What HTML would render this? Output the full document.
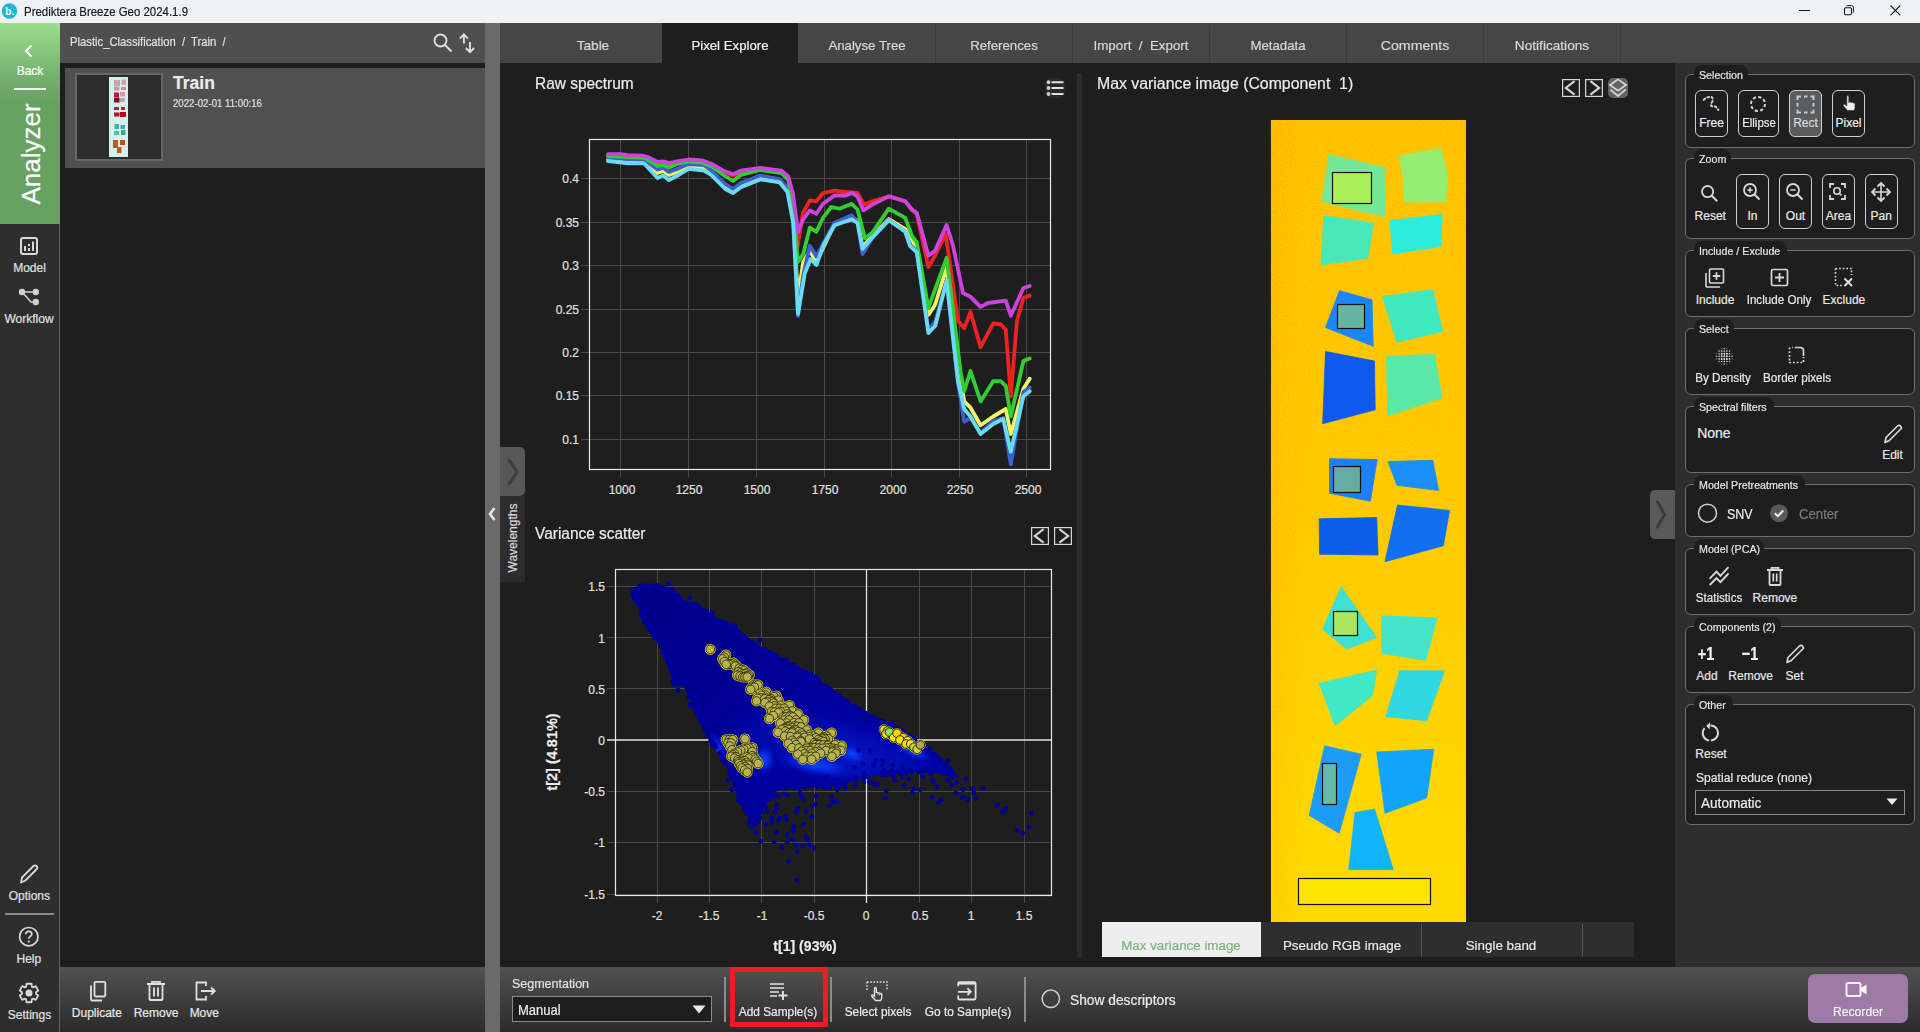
<!DOCTYPE html><html><head><meta charset="utf-8"><title>Prediktera Breeze Geo</title><style>
*{margin:0;padding:0;box-sizing:border-box}
html,body{width:1920px;height:1032px;overflow:hidden;background:#1e1e1e;font-family:"Liberation Sans",sans-serif;color:#e6e6e6}
.a{position:absolute}
.t{position:absolute;white-space:pre;line-height:1;-webkit-text-stroke:0.2px currentColor}
svg{position:absolute;overflow:visible}
</style></head><body>
<div class="a" style="left:0px;top:0px;width:1920px;height:23px;background:#eef2f5;"></div>
<svg style="left:1px;top:3px;" width="17" height="17" viewBox="0 0 17 17"><circle cx="8.5" cy="8" r="7.7" fill="#19b6d6"/><text x="4" y="12" font-size="10.5" font-weight="bold" fill="#fff" font-family="Liberation Sans">b.</text></svg>
<div class="t" style="top:5.59px;font-size:12.30px;color:#1a1a1a;left:23.50px;transform:scaleX(0.93);transform-origin:0 0;">Prediktera Breeze Geo 2024.1.9</div>
<div class="a" style="left:1799px;top:10px;width:11px;height:1px;background:#1a1a1a;"></div>
<svg style="left:1843px;top:5px;" width="12" height="12" viewBox="0 0 12 12"><rect x="1.5" y="2.8" width="7" height="7" rx="1.2" fill="none" stroke="#1a1a1a" stroke-width="1.1"/><path d="M3.3 1.2Q3.6 0.6 4.6 0.6H8.4Q10.4 0.6 10.4 2.6V6.5Q10.4 7.6 9.8 8" fill="none" stroke="#1a1a1a" stroke-width="1"/></svg>
<svg style="left:1890px;top:5px;" width="11" height="11" viewBox="0 0 11 11"><path d="M0.5 0.5L10.3 10.3M10.3 0.5L0.5 10.3" stroke="#1a1a1a" stroke-width="1.1"/></svg>
<div class="a" style="left:0px;top:23px;width:60px;height:1009px;background:#2e2e2e;"></div>
<div class="a" style="left:59px;top:224px;width:1px;height:808px;background:#666;"></div>
<div class="a" style="left:0px;top:23px;width:60px;height:201px;background:linear-gradient(#9cde8b 0px,#72ad6c 58px,#68a263 80px,#68a263 201px);"></div>
<svg style="left:24px;top:44px;" width="10" height="14" viewBox="0 0 10 14"><path d="M7.5 1.5L2 7L7.5 12.5" fill="none" stroke="#fff" stroke-width="2"/></svg>
<div class="t" style="top:65.34px;font-size:12.00px;color:#ffffff;left:-170.00px;width:400px;text-align:center;">Back</div>
<div class="a" style="left:14px;top:88px;width:32px;height:2px;background:#f4f4f4;"></div>
<div class="t" style="left:31px;top:154px;font-size:26px;color:#fff;transform:translate(-50%,-50%) rotate(-90deg);transform-origin:50% 50%">Analyzer</div>
<svg style="left:20px;top:237px;" width="19" height="19" viewBox="0 0 19 19"><rect x="1" y="1" width="16" height="16" rx="2" fill="none" stroke="#d8d8d8" stroke-width="2"/><rect x="4" y="9" width="2" height="5" fill="#d8d8d8"/><rect x="8" y="7" width="2" height="2" fill="#d8d8d8"/><rect x="8" y="11" width="2" height="3" fill="#d8d8d8"/><rect x="12" y="4.5" width="2" height="9.5" fill="#d8d8d8"/></svg>
<div class="t" style="top:261.54px;font-size:12.00px;color:#e0e0e0;left:-170.50px;width:400px;text-align:center;">Model</div>
<svg style="left:18px;top:287px;" width="22" height="20" viewBox="0 0 22 20"><path d="M4 5H17.8M4 5L13 15H17.8" fill="none" stroke="#d0d0d0" stroke-width="1.5"/><circle cx="4" cy="5" r="3.2" fill="#d0d0d0"/><circle cx="17.8" cy="5" r="3.2" fill="#d0d0d0"/><circle cx="17.8" cy="15" r="3.2" fill="#d0d0d0"/></svg>
<div class="t" style="top:312.74px;font-size:12.00px;color:#e0e0e0;left:-171.00px;width:400px;text-align:center;">Workflow</div>
<svg style="left:18px;top:863px;" width="22" height="22" viewBox="0 0 22 22"><path d="M3 19.5L4 14.5L15.5 3Q17 1.7 18.5 3Q20 4.5 18.8 6L7.3 17.5Z" fill="none" stroke="#d8d8d8" stroke-width="1.8" stroke-linejoin="round"/></svg>
<div class="t" style="top:889.74px;font-size:12.00px;color:#e0e0e0;left:-170.70px;width:400px;text-align:center;">Options</div>
<div class="a" style="left:5px;top:913px;width:49px;height:2px;background:#8a8a8a;"></div>
<svg style="left:18px;top:926px;" width="22" height="22" viewBox="0 0 22 22"><circle cx="10.8" cy="10.7" r="9.2" fill="none" stroke="#d8d8d8" stroke-width="1.7"/><path d="M7.8 8.3Q7.8 5.3 10.8 5.3Q13.8 5.3 13.8 8Q13.8 9.6 12 10.6Q10.8 11.4 10.8 12.8" fill="none" stroke="#d8d8d8" stroke-width="1.7"/><circle cx="10.8" cy="15.6" r="1.1" fill="#d8d8d8"/></svg>
<div class="t" style="top:952.54px;font-size:12.00px;color:#e0e0e0;left:-171.20px;width:400px;text-align:center;">Help</div>
<svg style="left:18px;top:982px;" width="22" height="22" viewBox="0 0 22 22"><polygon points="8.44,1.75 13.56,1.75 13.85,4.61 15.11,5.33 17.73,4.16 20.29,8.59 17.96,10.28 17.96,11.72 20.29,13.41 17.73,17.84 15.11,16.67 13.85,17.39 13.56,20.25 8.44,20.25 8.15,17.39 6.89,16.67 4.27,17.84 1.71,13.41 4.04,11.72 4.04,10.28 1.71,8.59 4.27,4.16 6.89,5.33 8.15,4.61" fill="none" stroke="#d8d8d8" stroke-width="1.8" stroke-linejoin="round"/><circle cx="11" cy="11" r="3.5" fill="#d8d8d8"/></svg>
<div class="t" style="top:1008.74px;font-size:12.00px;color:#e0e0e0;left:-170.50px;width:400px;text-align:center;">Settings</div>
<div class="a" style="left:60px;top:23px;width:425px;height:40px;background:#4f4f4f;"></div>
<div class="t" style="top:35.59px;font-size:12.30px;color:#e0e0e0;left:69.80px;transform:scaleX(0.915);transform-origin:0 0;">Plastic_Classification  /  Train  /</div>
<svg style="left:432px;top:32px;" width="22" height="22" viewBox="0 0 22 22"><circle cx="8.5" cy="8.5" r="6" fill="none" stroke="#e0e0e0" stroke-width="1.8"/><path d="M13 13L19.5 19.5" stroke="#e0e0e0" stroke-width="2"/></svg>
<svg style="left:459px;top:32px;" width="18" height="22" viewBox="0 0 18 22"><path d="M4.9 11.6V2.6M0.8 6.6L4.9 2.4L9 6.6" fill="none" stroke="#e0e0e0" stroke-width="1.9"/><path d="M11 10V20.2M6.9 16L11 20.2L15.1 16" fill="none" stroke="#e0e0e0" stroke-width="1.9"/></svg>
<div class="a" style="left:65px;top:68px;width:420px;height:100px;background:#505050;"></div>
<div class="a" style="left:75px;top:73px;width:88px;height:88px;background:#2c2c2c;border:2px solid #666"></div>
<svg style="left:109px;top:77px;" width="19" height="80" viewBox="0 0 19 80"><rect width="19" height="80" fill="#d6eeee"/><path d="M5 3H11V9H5Z" fill="#c8a2a8"/><path d="M12.5 2.5H17V8H12.5Z" fill="#cba6ab"/><path d="M5 9.5H10.5V13.5H5Z" fill="#c29aa0"/><path d="M12 10H17V13H12Z" fill="#d08a92"/><path d="M5 15.5H10V20H5Z" fill="#b41a2a"/><path d="M11 15H16V19.5H11Z" fill="#c89ca2"/><path d="M5 20.5H10.5V25.5H5Z" fill="#7c1018"/><path d="M11 21H16V25H11Z" fill="#c8a0a6"/><path d="M5 30H10V33H5Z" fill="#a02030"/><path d="M12 30H16V33H12Z" fill="#a82838"/><path d="M5 35.5H10.5V39.5H5Z" fill="#b01020"/><path d="M11 35H17V40H11Z" fill="#a81020"/><path d="M5.5 47H10V52H5.5Z" fill="#38b8a8"/><path d="M11.5 48H16V52H11.5Z" fill="#40b0b0"/><path d="M5 54H10V58H5Z" fill="#50c0a8"/><path d="M12 53H16.5V58H12Z" fill="#30a898"/><path d="M4 63H9V71H4Z" fill="#c05818"/><path d="M11 63H16V68H11Z" fill="#c05020"/><path d="M8 70H12.5V76H8Z" fill="#c05a20"/></svg>
<div class="t" style="top:75.49px;font-size:17.50px;color:#ececec;font-weight:bold;left:173.00px;">Train</div>
<div class="t" style="top:98.11px;font-size:10.50px;color:#e0e0e0;left:173.00px;transform:scaleX(0.92);transform-origin:0 0;">2022-02-01 11:00:16</div>
<div class="a" style="left:60px;top:967px;width:425px;height:65px;background:linear-gradient(#515151,#2b2b2b);"></div>
<svg style="left:85px;top:979px;" width="24" height="24" viewBox="0 0 24 24"><path d="M6 6.5V20.5Q6 21.5 7 21.5H17" fill="none" stroke="#e0e0e0" stroke-width="1.8"/><rect x="9.5" y="2.9" width="10.8" height="14.6" rx="1.2" fill="none" stroke="#e0e0e0" stroke-width="1.8"/></svg>
<div class="t" style="top:1006.54px;font-size:12.00px;color:#e8e8e8;left:-103.20px;width:400px;text-align:center;">Duplicate</div>
<svg style="left:144px;top:979px;" width="24" height="24" viewBox="0 0 24 24"><path d="M3 5H21M8 4.5V2.8H16V4.5" fill="none" stroke="#e0e0e0" stroke-width="1.8"/><path d="M5.5 5.5V20.2Q5.5 21 6.3 21H17.7Q18.5 21 18.5 20.2V5.5" fill="none" stroke="#e0e0e0" stroke-width="1.8"/><path d="M10 8.5V17.5M14 8.5V17.5" stroke="#e0e0e0" stroke-width="1.8"/></svg>
<div class="t" style="top:1006.54px;font-size:12.00px;color:#e8e8e8;left:-44.00px;width:400px;text-align:center;">Remove</div>
<svg style="left:193px;top:979px;" width="26" height="24" viewBox="0 0 26 24"><path d="M13 7V3.5H3.5V20.5H13V17" fill="none" stroke="#e0e0e0" stroke-width="1.8"/><path d="M8 12H21.5M18 8.5L21.8 12L18 15.5" fill="none" stroke="#e0e0e0" stroke-width="1.8"/></svg>
<div class="t" style="top:1006.54px;font-size:12.00px;color:#e8e8e8;left:4.30px;width:400px;text-align:center;">Move</div>
<div class="a" style="left:485px;top:23px;width:15px;height:1009px;background:#6a6a6a;"></div>
<svg style="left:487px;top:506px;" width="10" height="16" viewBox="0 0 10 16"><path d="M7.5 2L3 8L7.5 14" fill="none" stroke="#e8e8e8" stroke-width="2.6"/></svg>
<div class="a" style="left:500px;top:23px;width:1420px;height:40px;background:#464646;"></div>
<div class="a" style="left:662px;top:25px;width:1px;height:38px;background:#3a3a3a;"></div>
<div class="a" style="left:662px;top:23px;width:136px;height:40px;background:#1e1e1e;"></div>
<div class="a" style="left:935px;top:25px;width:1px;height:38px;background:#3a3a3a;"></div>
<div class="a" style="left:1072px;top:25px;width:1px;height:38px;background:#3a3a3a;"></div>
<div class="a" style="left:1209px;top:25px;width:1px;height:38px;background:#3a3a3a;"></div>
<div class="a" style="left:1346px;top:25px;width:1px;height:38px;background:#3a3a3a;"></div>
<div class="a" style="left:1483px;top:25px;width:1px;height:38px;background:#3a3a3a;"></div>
<div class="a" style="left:1620px;top:25px;width:1px;height:38px;background:#3a3a3a;"></div>
<div class="t" style="top:39.47px;font-size:13.50px;color:#d8d8d8;left:393.00px;width:400px;text-align:center;transform:scaleX(1.0);transform-origin:200px 0;">Table</div>
<div class="t" style="top:39.47px;font-size:13.50px;color:#f2f2f2;left:530.00px;width:400px;text-align:center;transform:scaleX(0.98);transform-origin:200px 0;">Pixel Explore</div>
<div class="t" style="top:39.47px;font-size:13.50px;color:#d8d8d8;left:666.50px;width:400px;text-align:center;transform:scaleX(0.98);transform-origin:200px 0;">Analyse Tree</div>
<div class="t" style="top:39.47px;font-size:13.50px;color:#d8d8d8;left:803.50px;width:400px;text-align:center;transform:scaleX(0.98);transform-origin:200px 0;">References</div>
<div class="t" style="top:39.47px;font-size:13.50px;color:#d8d8d8;left:940.50px;width:400px;text-align:center;transform:scaleX(0.99);transform-origin:200px 0;">Import  /  Export</div>
<div class="t" style="top:39.47px;font-size:13.50px;color:#d8d8d8;left:1077.50px;width:400px;text-align:center;transform:scaleX(0.98);transform-origin:200px 0;">Metadata</div>
<div class="t" style="top:39.47px;font-size:13.50px;color:#d8d8d8;left:1214.50px;width:400px;text-align:center;transform:scaleX(1.05);transform-origin:200px 0;">Comments</div>
<div class="t" style="top:39.47px;font-size:13.50px;color:#d8d8d8;left:1351.50px;width:400px;text-align:center;transform:scaleX(1.01);transform-origin:200px 0;">Notifications</div>
<div class="a" style="left:1077px;top:73px;width:5px;height:884px;background:#2c2c2c;"></div>
<div class="t" style="top:76.06px;font-size:16.00px;color:#ececec;left:535.30px;transform:scaleX(0.965);transform-origin:0 0;">Raw spectrum</div>
<svg style="left:1045px;top:78px;" width="20" height="20" viewBox="0 0 20 20"><rect width="20" height="20" rx="6" fill="#2a2a2a"/><circle cx="3.5" cy="4.2" r="1.9" fill="#d0d0d0"/><circle cx="3.5" cy="10" r="1.9" fill="#d0d0d0"/><circle cx="3.5" cy="16" r="1.9" fill="#d0d0d0"/><path d="M6.5 4.2H18.5M6.5 10H18.5M6.5 16H18.5" stroke="#e0e0e0" stroke-width="2"/></svg>
<div class="t" style="top:525.76px;font-size:16.00px;color:#ececec;left:535.00px;transform:scaleX(0.965);transform-origin:0 0;">Variance scatter</div>
<div class="t" style="top:76.06px;font-size:16.00px;color:#ececec;left:1097.10px;transform:scaleX(0.99);transform-origin:0 0;">Max variance image (Component  1)</div>
<svg style="left:1562px;top:79px;" width="18" height="18" viewBox="0 0 18 18"><rect x="0.6" y="0.6" width="16.8" height="16.8" fill="#1e1e1e" stroke="#d8d8d8" stroke-width="1.2"/><path d="M12.6 2.2L3.8 8.9L12.6 15.6" fill="none" stroke="#d4d4d4" stroke-width="2.1"/></svg>
<svg style="left:1585px;top:79px;" width="18" height="18" viewBox="0 0 18 18"><rect x="0.6" y="0.6" width="16.8" height="16.8" fill="#1e1e1e" stroke="#d8d8d8" stroke-width="1.2"/><path d="M5.4 2.2L14.2 8.9L5.4 15.6" fill="none" stroke="#d4d4d4" stroke-width="2.1"/></svg>
<svg style="left:1608px;top:78px;" width="20" height="20" viewBox="0 0 20 20"><rect width="20" height="20" rx="5" fill="#636363"/><path d="M10 1.4L18 7L10 12.8L2 7Z" fill="none" stroke="#d6d6d6" stroke-width="1.7"/><path d="M2.4 11.6L10 18L17.8 11.4" fill="none" stroke="#d6d6d6" stroke-width="1.8"/></svg>
<svg style="left:1031px;top:527px;" width="18" height="18" viewBox="0 0 18 18"><rect x="0.6" y="0.6" width="16.8" height="16.8" fill="#1e1e1e" stroke="#d8d8d8" stroke-width="1.2"/><path d="M12.6 2.2L3.8 8.9L12.6 15.6" fill="none" stroke="#d4d4d4" stroke-width="2.1"/></svg>
<svg style="left:1054px;top:527px;" width="18" height="18" viewBox="0 0 18 18"><rect x="0.6" y="0.6" width="16.8" height="16.8" fill="#1e1e1e" stroke="#d8d8d8" stroke-width="1.2"/><path d="M5.4 2.2L14.2 8.9L5.4 15.6" fill="none" stroke="#d4d4d4" stroke-width="2.1"/></svg>
<div class="a" style="left:500px;top:447px;width:25px;height:49px;background:#585858;border-radius:0 5px 5px 0"></div>
<svg style="left:503px;top:455px;" width="20" height="34" viewBox="0 0 20 34"><path d="M6 5L14 17L6 29" fill="none" stroke="#3e3e3e" stroke-width="3" stroke-linecap="round"/></svg>
<div class="a" style="left:500px;top:496px;width:25px;height:86px;background:#2c2c2c;"></div>
<div class="t" style="left:512.5px;top:538px;font-size:12px;color:#d8d8d8;transform:translate(-50%,-50%) rotate(-90deg)">Wavelengths</div>
<div class="a" style="left:1650px;top:490px;width:25px;height:49px;background:#5a5a5a;border-radius:5px 0 0 5px"></div>
<svg style="left:1652px;top:497px;" width="20" height="36" viewBox="0 0 20 36"><path d="M5.5 5L12.5 17.5L5.5 30" fill="none" stroke="#3c3c3c" stroke-width="3" stroke-linecap="round"/></svg>
<div class="t" style="top:939.03px;font-size:14.50px;color:#ececec;font-weight:bold;left:604.80px;width:400px;text-align:center;transform:scaleX(0.97);transform-origin:200px 0;">t[1] (93%)</div>
<div class="t" style="left:552.3px;top:752px;font-size:14.5px;font-weight:bold;color:#ececec;transform:translate(-50%,-50%) rotate(-90deg)">t[2] (4.81%)</div>
<svg style="left:0;top:0" width="1920" height="1032"><path d="M620.5 140V477M688.5 140V477M756.5 140V477M824.5 140V477M891.5 140V477M959.5 140V477M1026.5 140V477M581 178.5H1051M581 222.5H1051M581 265.5H1051M581 309.5H1051M581 352.5H1051M581 395.5H1051M581 439.5H1051" stroke="#4a4a4a" stroke-width="1" fill="none"/><rect x="589.5" y="139.5" width="461" height="330" fill="none" stroke="#e8e8e8" stroke-width="1.2"/><polyline points="608.0,159.5 628.4,161.0 644.0,161.5 657.5,173.0 663.3,171.0 669.0,175.0 677.0,172.0 688.5,166.5 704.0,168.0 711.8,172.5 725.3,186.0 733.0,191.0 740.9,185.0 760.2,177.0 779.6,180.5 787.4,189.0 793.2,215.0 798.0,298.0 803.2,262.0 809.8,250.7 816.4,262.0 834.5,224.0 851.8,217.0 857.5,221.0 862.5,247.0 872.4,236.0 888.8,219.0 905.3,229.0 912.0,240.0 916.8,249.0 928.4,315.0 935.0,305.0 946.6,267.8 958.0,365.0 964.2,401.4 970.5,407.7 980.6,425.3 993.2,416.5 1005.8,409.0 1010.8,434.0 1023.4,388.8 1029.7,378.7" fill="none" stroke="#f2f26a" stroke-width="3.8" stroke-linejoin="round" stroke-linecap="round"/><polyline points="608.0,158.0 628.4,159.0 644.0,159.5 657.5,169.5 663.3,168.0 669.0,172.0 677.0,169.0 688.5,164.0 704.0,165.0 711.8,171.0 725.3,184.0 733.0,189.0 740.9,183.0 760.2,175.5 779.6,179.0 787.4,188.0 793.2,218.0 798.0,316.0 803.2,275.4 809.8,245.8 816.4,256.5 834.5,222.7 851.8,215.3 857.5,222.7 862.5,254.0 872.4,238.0 888.8,220.0 905.3,231.8 910.0,245.0 916.8,251.0 928.4,330.0 935.0,322.0 946.6,282.0 958.0,383.0 964.2,421.5 970.5,418.0 980.6,433.0 993.2,421.0 1003.3,418.0 1010.8,464.3 1023.4,392.0 1029.7,387.5" fill="none" stroke="#3f5fd0" stroke-width="3.8" stroke-linejoin="round" stroke-linecap="round"/><polyline points="608.0,155.5 620.7,155.5 628.4,156.5 642.0,157.0 647.8,158.5 657.5,164.0 663.3,163.0 669.0,165.0 677.0,163.0 688.5,160.5 702.0,161.5 711.8,165.5 723.4,172.0 733.0,175.5 740.9,172.0 760.2,169.0 781.5,172.0 788.3,178.0 793.0,200.0 797.4,247.4 803.0,212.8 809.8,200.5 816.4,201.3 823.0,193.0 834.5,190.6 846.0,192.0 857.5,193.0 864.0,204.6 872.4,201.3 888.8,196.4 905.3,201.3 912.0,210.0 916.8,214.0 928.4,267.2 935.0,255.7 945.7,234.2 958.0,320.7 964.2,328.3 970.5,312.0 980.6,347.2 993.2,323.3 1000.8,324.5 1005.8,329.6 1010.8,396.3 1017.0,320.7 1023.4,298.0 1029.7,295.6" fill="none" stroke="#ee2222" stroke-width="3.8" stroke-linejoin="round" stroke-linecap="round"/><polyline points="608.0,156.0 628.4,157.0 644.0,157.5 657.5,166.0 663.3,165.0 669.0,167.5 677.0,164.0 688.5,161.5 702.0,162.5 711.8,166.5 723.4,175.0 733.0,181.0 740.9,175.0 760.2,170.0 781.5,173.0 788.3,180.0 793.0,205.0 798.0,262.0 803.2,254.0 809.8,227.7 816.4,231.8 823.0,217.8 831.2,207.0 839.4,208.7 851.8,203.8 857.5,209.5 865.0,238.4 872.4,232.6 888.8,208.7 905.3,217.8 912.0,236.0 916.8,242.5 928.4,308.0 946.6,257.8 960.5,371.0 964.2,391.3 970.5,371.0 980.6,401.4 993.2,381.2 1000.8,381.2 1005.8,386.2 1010.8,416.5 1023.4,361.0 1029.7,358.5" fill="none" stroke="#33cc33" stroke-width="3.8" stroke-linejoin="round" stroke-linecap="round"/><polyline points="608.0,154.2 620.7,154.2 628.4,155.2 642.0,155.6 647.8,157.0 657.5,162.0 663.3,161.4 669.0,163.0 677.0,161.4 688.5,159.5 702.0,160.4 711.8,164.0 723.4,170.7 733.0,174.2 740.9,170.7 760.2,167.8 781.5,170.7 788.3,176.5 793.0,194.0 798.0,232.0 803.2,219.4 809.8,210.4 816.4,213.7 823.0,203.8 834.5,195.5 846.0,195.5 851.8,193.0 857.5,196.4 863.3,210.4 872.4,204.6 888.8,196.4 905.3,201.3 912.0,209.5 916.8,212.8 928.4,255.7 935.0,250.7 946.6,225.0 952.9,245.2 963.0,293.0 970.5,296.8 980.6,306.9 988.0,303.0 1005.8,300.6 1010.8,315.7 1023.4,288.0 1029.7,286.0" fill="none" stroke="#cc44dd" stroke-width="3.8" stroke-linejoin="round" stroke-linecap="round"/><polyline points="608.0,161.0 628.4,163.3 644.0,163.3 657.5,178.0 663.3,175.5 668.8,180.0 677.0,176.0 688.5,168.8 704.0,170.7 711.8,175.5 725.3,189.0 733.0,193.0 740.9,187.2 760.2,179.4 779.6,182.3 787.4,192.0 793.2,223.0 798.0,314.0 804.8,273.4 810.6,259.0 816.4,265.0 824.0,244.0 834.5,225.2 851.8,219.4 857.5,223.0 862.5,249.0 872.4,237.5 888.8,220.2 905.3,231.8 910.0,245.8 916.8,252.4 928.4,333.0 935.3,325.8 946.6,280.5 958.0,381.2 964.2,409.0 970.5,416.5 980.6,434.0 993.2,424.0 1003.3,419.0 1010.8,451.7 1023.4,396.3 1029.7,391.3" fill="none" stroke="#6adcf2" stroke-width="3.8" stroke-linejoin="round" stroke-linecap="round"/><path d="M657.5 570V903M709.5 570V903M761.5 570V903M814.5 570V903M919.5 570V903M971.5 570V903M1024.5 570V903M607 586.5H1051M607 637.5H1051M607 688.5H1051M607 791.5H1051M607 842.5H1051M607 894.5H1051" stroke="#4a4a4a" stroke-width="1" fill="none"/><path d="M866.5 570V903M607 740H1051" stroke="#e4e4e4" stroke-width="1.3" fill="none"/><rect x="615.5" y="569.5" width="436" height="326" fill="none" stroke="#e8e8e8" stroke-width="1.2"/><defs><radialGradient id="rg1"><stop offset="0" stop-color="#1048ff" stop-opacity="1"/><stop offset="0.5" stop-color="#0830f0" stop-opacity="0.7"/><stop offset="1" stop-color="#0010c0" stop-opacity="0"/></radialGradient><linearGradient id="tl" x1="634" y1="588" x2="800" y2="740" gradientUnits="userSpaceOnUse"><stop offset="0" stop-color="#000080" stop-opacity="0.8"/><stop offset="1" stop-color="#000080" stop-opacity="0"/></linearGradient><clipPath id="cc"><polygon points="633.0,588.0 640.0,585.5 650.0,584.7 658.5,583.0 662.6,588.0 673.6,587.6 678.8,596.3 688.0,602.7 699.8,604.4 706.7,610.2 716.0,620.0 728.0,623.0 741.6,632.3 756.7,644.0 769.5,652.0 780.0,656.7 814.0,675.7 849.0,702.0 866.3,712.8 892.5,723.7 918.7,741.0 936.0,754.0 953.5,771.7 957.0,778.0 952.6,777.0 939.4,773.0 906.4,773.0 866.9,777.0 840.6,785.0 807.6,788.0 774.7,790.0 765.0,806.0 757.0,826.0 744.0,812.0 726.8,767.3 705.0,732.4 683.0,684.4 674.2,684.7 664.9,656.7 659.0,645.0 653.3,637.0 641.6,618.4 640.5,608.0 632.3,597.4"/></clipPath></defs><polygon points="633.0,588.0 640.0,585.5 650.0,584.7 658.5,583.0 662.6,588.0 673.6,587.6 678.8,596.3 688.0,602.7 699.8,604.4 706.7,610.2 716.0,620.0 728.0,623.0 741.6,632.3 756.7,644.0 769.5,652.0 780.0,656.7 814.0,675.7 849.0,702.0 866.3,712.8 892.5,723.7 918.7,741.0 936.0,754.0 953.5,771.7 957.0,778.0 952.6,777.0 939.4,773.0 906.4,773.0 866.9,777.0 840.6,785.0 807.6,788.0 774.7,790.0 765.0,806.0 757.0,826.0 744.0,812.0 726.8,767.3 705.0,732.4 683.0,684.4 674.2,684.7 664.9,656.7 659.0,645.0 653.3,637.0 641.6,618.4 640.5,608.0 632.3,597.4" fill="#00009e"/><g clip-path="url(#cc)"><rect x="620" y="575" width="350" height="260" fill="url(#tl)"/><ellipse cx="840" cy="752" rx="130" ry="40" fill="url(#rg1)" opacity="0.35" transform="rotate(14 840 752)"/><ellipse cx="715" cy="752" rx="14" ry="22" fill="url(#rg1)" transform="rotate(-20 715 752)"/><ellipse cx="764" cy="760" rx="12" ry="16" fill="url(#rg1)"/><ellipse cx="815" cy="764" rx="40" ry="12" fill="url(#rg1)" transform="rotate(12 815 764)"/><ellipse cx="852" cy="754" rx="16" ry="9" fill="url(#rg1)" transform="rotate(20 852 754)"/><ellipse cx="912" cy="750" rx="22" ry="8" fill="url(#rg1)" transform="rotate(28 912 750)"/></g><path d="M952.8 776.6h0M707.6 735.5h0M719.1 622.3h0M650.4 586.2h0M672.9 590.3h0M838.9 695.0h0M807.6 785.2h0M700.3 716.0h0M787.0 661.1h0M914.4 738.3h0M661.1 587.8h0M863.4 777.6h0M655.6 637.4h0M692.8 700.6h0M673.6 679.2h0M882.7 774.9h0M758.6 820.0h0M665.3 589.1h0M838.3 695.1h0M704.9 729.8h0M767.5 651.7h0M724.6 760.1h0M783.0 660.8h0M673.6 681.4h0M722.2 756.1h0M874.5 718.1h0M804.1 670.8h0M649.4 626.4h0M729.4 625.9h0M723.1 622.8h0M796.0 667.7h0M847.2 781.1h0M665.8 657.7h0M760.6 810.4h0M895.0 771.6h0M786.1 660.2h0M771.6 794.8h0M936.2 755.4h0M860.4 709.1h0M675.4 680.1h0M816.5 678.3h0M647.4 626.9h0M663.3 653.1h0M690.1 695.2h0M796.9 788.6h0M759.1 819.2h0M776.1 655.3h0M662.1 587.7h0M846.7 701.2h0M892.0 723.8h0M935.4 755.3h0M919.6 772.2h0M643.8 612.2h0M868.8 716.1h0M750.4 816.4h0M775.1 789.7h0M692.7 704.2h0M954.4 776.3h0M903.1 771.7h0M663.5 588.4h0M654.0 637.7h0M841.8 698.5h0M948.0 772.6h0M934.5 754.4h0M660.0 587.1h0M772.3 791.7h0M803.5 671.4h0M797.8 787.7h0M831.4 690.5h0M679.6 682.8h0M728.4 625.7h0M695.7 706.3h0M841.7 784.5h0M685.2 602.8h0M771.9 653.7h0M794.9 788.0h0M772.8 791.0h0M893.3 725.7h0M768.0 797.1h0M773.9 791.2h0M895.5 772.0h0M817.7 679.5h0M751.7 641.8h0M695.0 604.2h0M750.7 817.4h0M784.0 787.4h0M894.6 771.4h0M952.9 772.4h0M826.0 687.4h0M860.9 710.2h0M745.3 809.4h0M806.7 673.2h0M720.2 752.4h0M632.8 594.7h0M696.5 709.0h0M716.1 622.0h0M945.4 766.3h0M775.8 789.1h0M698.9 717.8h0M640.1 585.7h0M723.9 622.0h0M697.0 712.5h0M918.1 743.4h0M951.5 775.9h0M793.1 665.6h0M806.7 786.4h0M651.6 585.9h0M708.5 735.8h0M734.7 785.2h0M714.4 619.1h0M697.1 604.7h0M936.3 755.2h0M936.9 756.0h0M945.5 773.2h0M756.4 644.5h0M641.8 615.9h0M665.4 656.4h0M697.2 712.2h0M873.6 718.3h0M725.2 763.5h0M938.9 757.9h0M707.0 730.5h0M648.6 629.5h0M690.5 696.3h0M651.6 630.8h0M865.8 713.2h0M715.6 747.3h0M768.3 799.0h0M756.1 645.7h0M904.2 732.5h0M663.6 588.1h0M835.4 784.8h0M671.4 671.6h0M950.2 770.0h0M661.5 646.0h0M635.3 591.8h0M800.5 670.6h0M723.4 622.5h0M673.3 681.3h0M689.0 696.7h0M700.9 721.4h0M699.9 716.1h0M685.8 685.8h0M891.5 724.7h0M766.9 798.8h0M778.6 658.9h0M855.2 779.6h0M921.4 745.5h0M886.6 774.1h0M826.0 686.9h0M709.6 615.2h0M946.6 765.4h0M742.3 804.4h0M855.5 779.2h0M756.9 820.1h0M674.0 683.6h0M692.2 604.9h0M637.7 602.4h0M667.2 590.5h0M926.9 748.0h0M762.1 806.7h0M929.7 749.5h0M662.1 645.7h0M641.2 612.7h0M762.9 805.4h0M711.4 741.5h0M887.4 773.9h0M757.8 818.0h0M776.6 655.3h0M865.0 713.0h0M864.9 714.1h0M729.9 767.6h0M711.3 616.2h0M856.5 708.6h0M773.2 654.0h0M897.2 729.0h0M768.5 797.1h0M927.0 770.6h0M690.5 604.4h0M706.6 611.2h0M697.0 713.3h0M667.8 590.7h0M905.5 772.7h0M715.9 621.9h0M719.9 752.9h0M691.1 697.0h0M844.3 781.5h0M668.8 590.4h0M764.0 807.4h0M642.9 585.9h0M712.5 741.6h0M690.8 698.1h0M855.4 777.6h0M635.1 595.2h0M693.9 605.0h0M725.7 624.3h0M680.9 682.0h0M694.6 604.8h0M756.8 822.3h0M710.6 740.3h0M891.6 773.1h0M644.2 622.2h0M725.5 623.2h0M714.9 744.6h0M936.8 770.5h0M921.4 745.5h0M717.2 621.0h0M887.1 773.0h0M647.7 627.6h0M760.0 817.8h0M635.0 594.8h0M756.8 824.0h0M740.5 801.7h0M673.9 591.6h0M668.3 663.3h0M901.9 731.1h0M691.8 605.1h0M699.1 714.4h0M873.2 716.4h0M908.7 735.3h0M634.8 599.6h0M918.0 770.6h0M839.1 784.6h0M950.5 768.7h0M644.4 618.1h0M713.2 617.4h0M660.6 643.9h0M740.9 633.9h0M803.8 786.2h0M689.8 605.2h0M679.9 684.2h0M673.9 683.8h0M729.8 773.2h0M863.6 777.5h0M703.7 726.2h0M736.5 789.8h0M892.6 771.7h0M816.1 784.4h0M845.7 782.8h0M855.6 707.8h0M817.7 786.6h0M764.5 649.5h0M940.7 759.9h0M698.3 711.5h0M644.3 585.9h0M866.9 777.0h0M859.7 711.0h0M848.3 702.4h0M909.9 770.4h0M679.9 684.1h0M828.8 687.7h0M955.2 776.2h0M633.4 590.1h0M692.3 700.9h0M911.8 771.9h0M903.5 770.4h0M641.9 607.1h0M859.9 710.4h0M720.3 752.4h0M632.6 594.9h0M633.3 594.1h0M942.1 772.5h0M688.7 695.2h0M890.2 724.3h0M833.6 783.3h0M895.0 727.5h0M934.4 770.5h0M836.6 695.2h0M797.4 668.6h0M667.4 661.0h0M864.7 777.0h0M756.5 822.6h0M639.2 606.3h0M953.6 774.8h0M747.8 813.7h0M739.0 797.4h0M769.5 653.1h0M943.6 764.1h0M635.4 600.0h0M807.8 785.9h0M842.9 700.0h0M738.9 798.0h0M679.9 598.1h0M678.3 595.9h0M667.7 660.8h0M770.6 792.2h0M895.2 773.1h0M886.3 774.7h0M674.3 678.7h0M950.8 769.7h0M677.4 683.7h0M847.6 780.4h0M883.1 721.5h0M890.7 771.8h0M690.2 696.9h0M743.1 636.3h0M804.2 672.3h0M845.6 783.0h0M893.7 774.1h0M793.8 664.5h0M753.9 822.4h0M685.9 685.8h0M764.7 805.8h0M923.9 770.4h0M674.3 684.4h0M726.2 624.2h0M860.2 709.9h0M847.3 703.5h0M897.0 727.9h0M787.1 787.6h0M642.0 614.1h0M759.3 647.6h0M797.2 668.4h0M854.6 706.2h0M945.7 772.2h0M694.4 606.4h0M844.8 700.6h0M897.7 771.6h0M921.4 743.5h0M731.3 775.5h0M722.6 623.2h0M736.1 629.1h0M719.6 621.0h0M818.0 678.8h0M757.5 646.4h0M694.4 709.1h0M929.2 770.4h0M943.4 772.6h0M652.9 635.3h0M642.1 616.9h0M811.0 674.1h0M754.6 645.3h0M814.9 676.7h0M675.4 595.3h0M809.0 675.1h0M900.5 729.8h0M677.8 597.5h0M910.8 737.3h0M805.2 786.8h0M704.2 727.9h0M902.8 733.2h0M673.4 673.8h0M919.8 771.6h0M914.8 739.0h0M669.3 664.4h0M894.1 727.3h0M798.6 785.6h0M833.9 783.0h0M901.5 772.9h0M936.8 770.6h0M817.6 781.5h0M912.3 792.7h0M826.8 788.1h0M836.8 802.2h0M940.8 799.9h0M844.9 787.8h0M837.4 789.8h0M891.8 770.5h0M832.7 801.4h0M816.0 796.0h0M826.9 777.0h0M825.2 779.6h0M797.8 808.8h0M831.6 796.3h0M932.5 779.7h0M951.5 784.6h0M801.0 796.0h0M874.8 784.4h0M863.6 773.7h0M838.0 787.4h0M939.0 802.2h0M827.6 780.4h0M893.6 776.5h0M884.3 770.1h0M863.9 781.9h0M829.0 787.2h0M955.8 793.2h0M902.5 766.0h0M855.8 777.2h0M882.7 760.8h0M752.6 784.4h0M756.6 780.4h0M760.7 786.5h0M768.2 788.5h0M775.6 784.4h0M775.6 789.2h0M785.1 777.6h0M785.1 785.8h0M793.3 787.1h0M800.0 787.1h0M806.8 785.1h0M824.5 787.1h0M827.2 780.4h0M834.7 779.7h0M841.4 780.4h0M844.8 785.8h0M855.7 785.1h0M869.3 782.4h0M875.4 784.4h0M749.9 789.9h0M755.3 791.2h0M762.0 797.3h0M766.8 793.9h0M770.2 798.7h0M774.3 796.0h0M778.3 796.6h0M783.8 793.9h0M787.8 795.3h0M800.0 793.2h0M803.4 798.7h0M751.2 799.3h0M758.0 802.0h0M753.9 806.1h0M777.0 804.8h0M777.0 807.5h0M765.5 808.2h0M767.5 811.6h0M775.0 812.2h0M756.0 813.6h0M753.9 815.6h0M771.6 817.7h0M779.7 818.3h0M785.1 817.0h0M786.5 819.7h0M777.0 820.4h0M796.0 812.2h0M806.2 811.6h0M812.3 806.1h0M815.7 804.1h0M829.2 806.1h0M811.6 817.0h0M766.1 824.5h0M771.6 822.4h0M794.0 826.5h0M803.4 824.5h0M749.9 821.0h0M748.5 823.8h0M752.6 827.2h0M756.0 832.6h0M776.3 832.6h0M787.2 834.6h0M793.3 831.2h0M806.2 837.3h0M807.5 840.0h0M760.7 841.4h0M774.3 842.1h0M787.2 841.4h0M793.3 840.0h0M796.7 844.8h0M802.8 846.2h0M809.6 844.8h0M814.3 848.2h0M781.7 847.5h0M796.7 851.6h0M788.5 861.1h0M796.7 880.1h0M858.5 750.4h0M870.3 750.4h0M875.6 761.0h0M862.8 764.2h0M854.3 767.4h0M873.5 765.3h0M882.0 765.3h0M892.6 765.3h0M882.0 771.7h0M890.5 773.8h0M894.8 780.2h0M902.2 777.0h0M908.6 779.1h0M904.4 785.5h0M914.0 788.7h0M920.4 789.8h0M886.2 790.9h0M871.3 782.3h0M877.7 784.5h0M855.3 784.5h0M865.0 777.0h0M922.5 777.0h0M931.0 773.8h0M937.4 786.6h0M933.2 781.3h0M885.2 798.3h0M932.0 797.3h0M948.0 780.2h0M956.6 782.3h0M948.0 761.0h0M952.3 773.8h0M966.2 779.1h0M963.0 789.8h0M972.6 788.7h0M973.7 793.0h0M983.3 788.3h0M962.4 797.3h0M968.3 799.4h0M975.8 798.3h0M997.1 805.4h0M1002.5 812.2h0M1005.7 809.0h0M1031.2 813.3h0M1017.4 830.3h0M1022.7 833.5h0M1029.1 827.1h0M650.0 590.0h0M668.0 584.0h0M690.0 598.0h0M712.0 613.0h0M735.0 626.0h0M760.0 640.0h0M636.0 593.0h0M645.0 612.0h0M655.0 630.0h0M670.0 668.0h0M678.0 690.0h0M690.0 705.0h0M700.0 720.0h0M712.0 745.0h0M722.0 760.0h0M735.0 785.0h0M745.0 795.0h0M760.0 805.0h0M738.0 800.0h0M732.0 790.0h0M728.0 780.0h0" stroke="#00009a" stroke-width="4.8" stroke-linecap="round" fill="none"/><path d="M710.3 649.4h0M725.9 655.0h0M724.2 657.0h0M722.6 658.9h0M724.4 661.6h0M733.4 663.0h0M729.8 663.7h0M731.7 664.0h0M729.0 664.2h0M726.2 664.4h0M736.3 665.6h0M735.4 666.1h0M739.2 668.3h0M741.6 669.4h0M744.0 670.5h0M738.2 671.8h0M746.7 672.7h0M740.7 672.9h0M743.4 673.8h0M745.6 673.8h0M749.4 674.9h0M737.3 675.2h0M746.1 676.0h0M748.3 676.0h0M740.1 676.1h0M742.8 677.0h0M745.0 677.0h0M747.2 677.0h0M753.2 685.0h0M755.6 685.0h0M758.0 685.0h0M752.0 687.2h0M754.4 687.2h0M750.7 689.4h0M766.4 692.2h0M765.5 695.0h0M761.4 695.2h0M776.3 695.9h0M774.0 696.6h0M765.2 697.4h0M760.5 698.0h0M757.4 698.2h0M764.7 698.8h0M771.3 698.9h0M769.0 699.6h0M778.4 700.2h0M756.5 701.0h0M772.3 701.0h0M771.2 701.4h0M767.3 701.9h0M765.0 702.6h0M773.4 703.2h0M780.6 705.3h0M789.3 705.3h0M774.5 705.8h0M769.4 706.2h0M775.6 708.3h0M780.0 708.3h0M784.3 708.3h0M792.2 711.0h0M785.8 711.1h0M771.6 711.3h0M780.3 711.3h0M774.5 712.0h0M778.4 712.6h0M787.2 714.0h0M798.0 714.0h0M790.1 715.5h0M773.4 715.6h0M783.2 717.0h0M785.8 717.0h0M789.3 717.0h0M793.0 717.0h0M769.4 718.6h0M803.8 719.8h0M795.9 719.9h0M784.3 720.0h0M789.0 720.0h0M793.7 722.8h0M798.8 722.8h0M786.5 722.9h0M780.3 723.0h0M788.7 725.8h0M794.8 725.8h0M787.0 726.4h0M797.4 726.4h0M801.0 727.0h0M785.4 727.6h0M792.4 727.9h0M784.7 728.8h0M782.0 729.4h0M788.7 729.4h0M793.7 730.0h0M796.0 730.0h0M806.7 730.0h0M785.4 731.2h0M792.4 731.5h0M798.9 731.5h0M778.0 732.4h0M788.7 733.0h0M792.0 733.0h0M801.7 733.0h0M818.4 733.0h0M831.5 733.0h0M809.7 734.4h0M803.2 735.2h0M784.7 736.0h0M797.7 736.0h0M813.4 736.0h0M826.5 736.0h0M823.5 736.6h0M790.5 736.6h0M809.0 736.7h0M797.3 737.3h0M804.7 737.4h0M816.0 737.8h0M822.5 737.8h0M828.5 738.7h0M745.0 738.8h0M825.0 738.9h0M809.4 739.0h0M822.5 739.0h0M726.2 739.6h0M729.5 739.6h0M732.7 739.6h0M818.5 739.6h0M792.3 740.3h0M800.7 740.4h0M821.0 740.7h0M801.0 741.7h0M823.5 741.7h0M794.1 742.5h0M814.5 742.6h0M728.0 742.9h0M731.2 742.9h0M788.3 743.3h0M816.6 743.6h0M815.5 744.6h0M819.8 744.6h0M835.0 744.6h0M826.8 744.7h0M796.0 744.7h0M819.5 744.7h0M823.1 745.0h0M827.8 745.3h0M841.6 746.0h0M729.8 746.1h0M752.3 747.6h0M810.5 747.6h0M812.6 747.6h0M814.8 747.6h0M830.0 747.6h0M792.0 747.7h0M749.4 748.0h0M798.9 748.0h0M818.8 748.0h0M826.4 748.0h0M806.7 748.2h0M746.5 748.3h0M822.8 748.3h0M833.3 748.3h0M836.6 749.0h0M743.6 749.4h0M732.0 749.8h0M840.9 750.4h0M740.7 750.5h0M833.0 750.5h0M806.5 750.6h0M810.8 750.6h0M826.0 750.6h0M801.7 751.2h0M836.2 751.2h0M818.8 751.3h0M752.3 751.6h0M737.5 752.0h0M815.2 752.0h0M832.6 752.0h0M811.8 753.3h0M820.6 753.3h0M734.2 753.4h0M835.9 753.4h0M804.2 753.8h0M797.7 754.2h0M732.8 754.8h0M752.3 755.6h0M731.3 756.3h0M806.8 756.3h0M811.2 756.3h0M815.6 756.3h0M831.9 756.4h0M736.0 756.7h0M753.8 757.4h0M748.6 758.1h0M734.5 758.1h0M755.2 759.2h0M802.8 759.3h0M811.6 759.3h0M737.8 760.0h0M741.4 760.3h0M745.0 760.6h0M756.7 761.4h0M738.5 761.8h0M742.1 762.0h0M746.5 762.8h0M739.2 763.5h0M758.1 763.5h0M743.6 764.2h0M743.6 764.3h0M748.0 765.0h0M740.7 765.8h0M745.1 766.5h0M742.2 768.0h0M747.6 768.6h0M744.7 770.1h0M747.2 772.3h0" stroke="#e4dc10" stroke-width="10.8" stroke-linecap="round" fill="none"/><g fill="#b8b250" stroke="#302e04" stroke-width="0.9"><circle cx="710.3" cy="649.4" r="4.3"/><circle cx="725.9" cy="655.0" r="4.3"/><circle cx="724.2" cy="657.0" r="4.3"/><circle cx="722.6" cy="658.9" r="4.3"/><circle cx="724.4" cy="661.6" r="4.3"/><circle cx="733.4" cy="663.0" r="4.3"/><circle cx="729.8" cy="663.7" r="4.3"/><circle cx="731.7" cy="664.0" r="4.3"/><circle cx="729.0" cy="664.2" r="4.3"/><circle cx="726.2" cy="664.4" r="4.3"/><circle cx="736.3" cy="665.6" r="4.3"/><circle cx="735.4" cy="666.1" r="4.3"/><circle cx="739.2" cy="668.3" r="4.3"/><circle cx="741.6" cy="669.4" r="4.3"/><circle cx="744.0" cy="670.5" r="4.3"/><circle cx="738.2" cy="671.8" r="4.3"/><circle cx="746.7" cy="672.7" r="4.3"/><circle cx="740.7" cy="672.9" r="4.3"/><circle cx="743.4" cy="673.8" r="4.3"/><circle cx="745.6" cy="673.8" r="4.3"/><circle cx="749.4" cy="674.9" r="4.3"/><circle cx="737.3" cy="675.2" r="4.3"/><circle cx="746.1" cy="676.0" r="4.3"/><circle cx="748.3" cy="676.0" r="4.3"/><circle cx="740.1" cy="676.1" r="4.3"/><circle cx="742.8" cy="677.0" r="4.3"/><circle cx="745.0" cy="677.0" r="4.3"/><circle cx="747.2" cy="677.0" r="4.3"/><circle cx="753.2" cy="685.0" r="4.3"/><circle cx="755.6" cy="685.0" r="4.3"/><circle cx="758.0" cy="685.0" r="4.3"/><circle cx="752.0" cy="687.2" r="4.3"/><circle cx="754.4" cy="687.2" r="4.3"/><circle cx="750.7" cy="689.4" r="4.3"/><circle cx="766.4" cy="692.2" r="4.3"/><circle cx="765.5" cy="695.0" r="4.3"/><circle cx="761.4" cy="695.2" r="4.3"/><circle cx="776.3" cy="695.9" r="4.3"/><circle cx="774.0" cy="696.6" r="4.3"/><circle cx="765.2" cy="697.4" r="4.3"/><circle cx="760.5" cy="698.0" r="4.3"/><circle cx="757.4" cy="698.2" r="4.3"/><circle cx="764.7" cy="698.8" r="4.3"/><circle cx="771.3" cy="698.9" r="4.3"/><circle cx="769.0" cy="699.6" r="4.3"/><circle cx="778.4" cy="700.2" r="4.3"/><circle cx="756.5" cy="701.0" r="4.3"/><circle cx="772.3" cy="701.0" r="4.3"/><circle cx="771.2" cy="701.4" r="4.3"/><circle cx="767.3" cy="701.9" r="4.3"/><circle cx="765.0" cy="702.6" r="4.3"/><circle cx="773.4" cy="703.2" r="4.3"/><circle cx="780.6" cy="705.3" r="4.3"/><circle cx="789.3" cy="705.3" r="4.3"/><circle cx="774.5" cy="705.8" r="4.3"/><circle cx="769.4" cy="706.2" r="4.3"/><circle cx="775.6" cy="708.3" r="4.3"/><circle cx="780.0" cy="708.3" r="4.3"/><circle cx="784.3" cy="708.3" r="4.3"/><circle cx="792.2" cy="711.0" r="4.3"/><circle cx="785.8" cy="711.1" r="4.3"/><circle cx="771.6" cy="711.3" r="4.3"/><circle cx="780.3" cy="711.3" r="4.3"/><circle cx="774.5" cy="712.0" r="4.3"/><circle cx="778.4" cy="712.6" r="4.3"/><circle cx="787.2" cy="714.0" r="4.3"/><circle cx="798.0" cy="714.0" r="4.3"/><circle cx="790.1" cy="715.5" r="4.3"/><circle cx="773.4" cy="715.6" r="4.3"/><circle cx="783.2" cy="717.0" r="4.3"/><circle cx="785.8" cy="717.0" r="4.3"/><circle cx="789.3" cy="717.0" r="4.3"/><circle cx="793.0" cy="717.0" r="4.3"/><circle cx="769.4" cy="718.6" r="4.3"/><circle cx="803.8" cy="719.8" r="4.3"/><circle cx="795.9" cy="719.9" r="4.3"/><circle cx="784.3" cy="720.0" r="4.3"/><circle cx="789.0" cy="720.0" r="4.3"/><circle cx="793.7" cy="722.8" r="4.3"/><circle cx="798.8" cy="722.8" r="4.3"/><circle cx="786.5" cy="722.9" r="4.3"/><circle cx="780.3" cy="723.0" r="4.3"/><circle cx="788.7" cy="725.8" r="4.3"/><circle cx="794.8" cy="725.8" r="4.3"/><circle cx="787.0" cy="726.4" r="4.3"/><circle cx="797.4" cy="726.4" r="4.3"/><circle cx="801.0" cy="727.0" r="4.3"/><circle cx="785.4" cy="727.6" r="4.3"/><circle cx="792.4" cy="727.9" r="4.3"/><circle cx="784.7" cy="728.8" r="4.3"/><circle cx="782.0" cy="729.4" r="4.3"/><circle cx="788.7" cy="729.4" r="4.3"/><circle cx="793.7" cy="730.0" r="4.3"/><circle cx="796.0" cy="730.0" r="4.3"/><circle cx="806.7" cy="730.0" r="4.3"/><circle cx="785.4" cy="731.2" r="4.3"/><circle cx="792.4" cy="731.5" r="4.3"/><circle cx="798.9" cy="731.5" r="4.3"/><circle cx="778.0" cy="732.4" r="4.3"/><circle cx="788.7" cy="733.0" r="4.3"/><circle cx="792.0" cy="733.0" r="4.3"/><circle cx="801.7" cy="733.0" r="4.3"/><circle cx="818.4" cy="733.0" r="4.3"/><circle cx="831.5" cy="733.0" r="4.3"/><circle cx="809.7" cy="734.4" r="4.3"/><circle cx="803.2" cy="735.2" r="4.3"/><circle cx="784.7" cy="736.0" r="4.3"/><circle cx="797.7" cy="736.0" r="4.3"/><circle cx="813.4" cy="736.0" r="4.3"/><circle cx="826.5" cy="736.0" r="4.3"/><circle cx="823.5" cy="736.6" r="4.3"/><circle cx="790.5" cy="736.6" r="4.3"/><circle cx="809.0" cy="736.7" r="4.3"/><circle cx="797.3" cy="737.3" r="4.3"/><circle cx="804.7" cy="737.4" r="4.3"/><circle cx="816.0" cy="737.8" r="4.3"/><circle cx="822.5" cy="737.8" r="4.3"/><circle cx="828.5" cy="738.7" r="4.3"/><circle cx="745.0" cy="738.8" r="4.3"/><circle cx="825.0" cy="738.9" r="4.3"/><circle cx="809.4" cy="739.0" r="4.3"/><circle cx="822.5" cy="739.0" r="4.3"/><circle cx="726.2" cy="739.6" r="4.3"/><circle cx="729.5" cy="739.6" r="4.3"/><circle cx="732.7" cy="739.6" r="4.3"/><circle cx="818.5" cy="739.6" r="4.3"/><circle cx="792.3" cy="740.3" r="4.3"/><circle cx="800.7" cy="740.4" r="4.3"/><circle cx="821.0" cy="740.7" r="4.3"/><circle cx="801.0" cy="741.7" r="4.3"/><circle cx="823.5" cy="741.7" r="4.3"/><circle cx="794.1" cy="742.5" r="4.3"/><circle cx="814.5" cy="742.6" r="4.3"/><circle cx="728.0" cy="742.9" r="4.3"/><circle cx="731.2" cy="742.9" r="4.3"/><circle cx="788.3" cy="743.3" r="4.3"/><circle cx="816.6" cy="743.6" r="4.3"/><circle cx="815.5" cy="744.6" r="4.3"/><circle cx="819.8" cy="744.6" r="4.3"/><circle cx="835.0" cy="744.6" r="4.3"/><circle cx="826.8" cy="744.7" r="4.3"/><circle cx="796.0" cy="744.7" r="4.3"/><circle cx="819.5" cy="744.7" r="4.3"/><circle cx="823.1" cy="745.0" r="4.3"/><circle cx="827.8" cy="745.3" r="4.3"/><circle cx="841.6" cy="746.0" r="4.3"/><circle cx="729.8" cy="746.1" r="4.3"/><circle cx="752.3" cy="747.6" r="4.3"/><circle cx="810.5" cy="747.6" r="4.3"/><circle cx="812.6" cy="747.6" r="4.3"/><circle cx="814.8" cy="747.6" r="4.3"/><circle cx="830.0" cy="747.6" r="4.3"/><circle cx="792.0" cy="747.7" r="4.3"/><circle cx="749.4" cy="748.0" r="4.3"/><circle cx="798.9" cy="748.0" r="4.3"/><circle cx="818.8" cy="748.0" r="4.3"/><circle cx="826.4" cy="748.0" r="4.3"/><circle cx="806.7" cy="748.2" r="4.3"/><circle cx="746.5" cy="748.3" r="4.3"/><circle cx="822.8" cy="748.3" r="4.3"/><circle cx="833.3" cy="748.3" r="4.3"/><circle cx="836.6" cy="749.0" r="4.3"/><circle cx="743.6" cy="749.4" r="4.3"/><circle cx="732.0" cy="749.8" r="4.3"/><circle cx="840.9" cy="750.4" r="4.3"/><circle cx="740.7" cy="750.5" r="4.3"/><circle cx="833.0" cy="750.5" r="4.3"/><circle cx="806.5" cy="750.6" r="4.3"/><circle cx="810.8" cy="750.6" r="4.3"/><circle cx="826.0" cy="750.6" r="4.3"/><circle cx="801.7" cy="751.2" r="4.3"/><circle cx="836.2" cy="751.2" r="4.3"/><circle cx="818.8" cy="751.3" r="4.3"/><circle cx="752.3" cy="751.6" r="4.3"/><circle cx="737.5" cy="752.0" r="4.3"/><circle cx="815.2" cy="752.0" r="4.3"/><circle cx="832.6" cy="752.0" r="4.3"/><circle cx="811.8" cy="753.3" r="4.3"/><circle cx="820.6" cy="753.3" r="4.3"/><circle cx="734.2" cy="753.4" r="4.3"/><circle cx="835.9" cy="753.4" r="4.3"/><circle cx="804.2" cy="753.8" r="4.3"/><circle cx="797.7" cy="754.2" r="4.3"/><circle cx="732.8" cy="754.8" r="4.3"/><circle cx="752.3" cy="755.6" r="4.3"/><circle cx="731.3" cy="756.3" r="4.3"/><circle cx="806.8" cy="756.3" r="4.3"/><circle cx="811.2" cy="756.3" r="4.3"/><circle cx="815.6" cy="756.3" r="4.3"/><circle cx="831.9" cy="756.4" r="4.3"/><circle cx="736.0" cy="756.7" r="4.3"/><circle cx="753.8" cy="757.4" r="4.3"/><circle cx="748.6" cy="758.1" r="4.3"/><circle cx="734.5" cy="758.1" r="4.3"/><circle cx="755.2" cy="759.2" r="4.3"/><circle cx="802.8" cy="759.3" r="4.3"/><circle cx="811.6" cy="759.3" r="4.3"/><circle cx="737.8" cy="760.0" r="4.3"/><circle cx="741.4" cy="760.3" r="4.3"/><circle cx="745.0" cy="760.6" r="4.3"/><circle cx="756.7" cy="761.4" r="4.3"/><circle cx="738.5" cy="761.8" r="4.3"/><circle cx="742.1" cy="762.0" r="4.3"/><circle cx="746.5" cy="762.8" r="4.3"/><circle cx="739.2" cy="763.5" r="4.3"/><circle cx="758.1" cy="763.5" r="4.3"/><circle cx="743.6" cy="764.2" r="4.3"/><circle cx="743.6" cy="764.3" r="4.3"/><circle cx="748.0" cy="765.0" r="4.3"/><circle cx="740.7" cy="765.8" r="4.3"/><circle cx="745.1" cy="766.5" r="4.3"/><circle cx="742.2" cy="768.0" r="4.3"/><circle cx="747.6" cy="768.6" r="4.3"/><circle cx="744.7" cy="770.1" r="4.3"/><circle cx="747.2" cy="772.3" r="4.3"/></g><path d="M884.0 729.5h0M887.5 731.0h0M886.0 734.0h0M889.4 732.2h0M893.7 737.6h0M897.0 733.3h0M903.3 737.6h0M900.0 740.0h0M907.6 740.8h0M906.0 744.0h0M910.8 744.0h0M914.0 747.2h0M917.2 749.3h0M920.4 745.0h0" stroke="#d8d020" stroke-width="10.4" stroke-linecap="round" fill="none"/><g stroke="#2a2806" stroke-width="1"><circle cx="884.0" cy="729.5" r="4.3" fill="#e0d820"/><circle cx="887.5" cy="731.0" r="4.3" fill="#e8e010"/><circle cx="886.0" cy="734.0" r="4.3" fill="#f0e000"/><circle cx="889.4" cy="732.2" r="4.3" fill="#90e070"/><circle cx="893.7" cy="737.6" r="4.3" fill="#ffe800"/><circle cx="897.0" cy="733.3" r="4.3" fill="#ffd400"/><circle cx="903.3" cy="737.6" r="4.3" fill="#ffcc00"/><circle cx="900.0" cy="740.0" r="4.3" fill="#f8e000"/><circle cx="907.6" cy="740.8" r="4.3" fill="#f0e020"/><circle cx="906.0" cy="744.0" r="4.3" fill="#f0e000"/><circle cx="910.8" cy="744.0" r="4.3" fill="#e8e040"/><circle cx="914.0" cy="747.2" r="4.3" fill="#c0d848"/><circle cx="917.2" cy="749.3" r="4.3" fill="#d0d040"/><circle cx="920.4" cy="745.0" r="4.3" fill="#b0a850"/></g><defs><filter id="nz" x="0" y="0" width="100%" height="100%"><feTurbulence type="fractalNoise" baseFrequency="0.7" numOctaves="2" seed="3" result="t"/><feColorMatrix in="t" values="0 0 0 0 1  0 0 0 0 0.72  0 0 0 0 0  0 0 0 -2.2 1.35"/><feComposite in2="SourceGraphic" operator="in"/></filter><linearGradient id="bgy" x1="0" y1="0" x2="0" y2="1"><stop offset="0" stop-color="#ffbc00"/><stop offset="0.5" stop-color="#ffc600"/><stop offset="1" stop-color="#ffdc00"/></linearGradient><linearGradient id="bgx" x1="0" y1="0" x2="1" y2="0"><stop offset="0" stop-color="#ff9a00" stop-opacity="0.22"/><stop offset="0.2" stop-color="#ffa000" stop-opacity="0"/><stop offset="1" stop-color="#ffa000" stop-opacity="0"/></linearGradient></defs><rect x="1270" y="120" width="196" height="802" fill="url(#bgy)"/><rect x="1270" y="120" width="196" height="802" fill="url(#bgx)"/><rect x="1270" y="120" width="196" height="802" fill="#fff" filter="url(#nz)" opacity="0.6"/><rect x="1270" y="120" width="1" height="802" fill="#2a2a30"/><polygon points="1328.9,154.5 1385.6,167.7 1385.0,216.8 1322.0,201.7" fill="#74e896" stroke="#74e896" stroke-width="0.8"/><polygon points="1399.4,155.7 1441.0,148.2 1447.9,176.5 1445.4,201.7 1404.5,202.3 1403.2,177.8" fill="#94ec70" stroke="#94ec70" stroke-width="0.8"/><polygon points="1323.9,215.6 1373.6,223.1 1367.9,258.4 1321.1,264.7" fill="#48e8b8" stroke="#48e8b8" stroke-width="0.8"/><polygon points="1390.0,220.6 1442.2,214.3 1441.0,246.4 1392.5,254.0" fill="#2cecdc" stroke="#2cecdc" stroke-width="0.8"/><polygon points="1339.4,290.7 1372.0,299.8 1373.2,346.3 1325.5,327.6" fill="#1a86fa" stroke="#1a86fa" stroke-width="0.8"/><polygon points="1382.3,296.7 1432.8,289.5 1442.7,331.6 1397.0,342.3" fill="#40e8c0" stroke="#40e8c0" stroke-width="0.8"/><polygon points="1325.5,351.5 1374.4,361.0 1375.2,409.8 1322.7,423.7" fill="#1058ee" stroke="#1058ee" stroke-width="0.8"/><polygon points="1386.3,356.2 1434.7,354.2 1441.9,397.9 1387.9,415.8" fill="#5ae8a8" stroke="#5ae8a8" stroke-width="0.8"/><polygon points="1329.5,458.7 1377.2,459.5 1370.4,501.2 1329.5,493.2" fill="#1c80f8" stroke="#1c80f8" stroke-width="0.8"/><polygon points="1387.9,461.5 1432.8,460.3 1438.7,490.5 1397.0,485.3" fill="#1890f8" stroke="#1890f8" stroke-width="0.8"/><polygon points="1319.2,518.8 1376.7,517.5 1378.0,555.0 1319.6,554.2" fill="#0c5ee8" stroke="#0c5ee8" stroke-width="0.8"/><polygon points="1397.5,505.0 1449.6,510.4 1443.3,545.8 1385.0,561.7" fill="#1070f2" stroke="#1070f2" stroke-width="0.8"/><polygon points="1341.2,586.7 1376.7,637.5 1346.7,649.2 1322.5,629.2" fill="#40e0d0" stroke="#40e0d0" stroke-width="0.8"/><polygon points="1381.7,615.8 1437.0,617.9 1425.8,660.4 1381.7,653.3" fill="#44e4cc" stroke="#44e4cc" stroke-width="0.8"/><polygon points="1319.2,683.3 1376.7,670.0 1372.5,695.8 1335.0,725.8" fill="#40e8c8" stroke="#40e8c8" stroke-width="0.8"/><polygon points="1399.6,670.8 1444.6,670.8 1426.7,720.8 1385.8,716.7" fill="#30d8e0" stroke="#30d8e0" stroke-width="0.8"/><polygon points="1324.6,745.8 1361.2,754.2 1339.2,833.3 1309.2,815.4" fill="#1c9cf6" stroke="#1c9cf6" stroke-width="0.8"/><polygon points="1376.7,752.0 1433.8,749.2 1426.7,797.9 1385.0,813.3" fill="#10a4fa" stroke="#10a4fa" stroke-width="0.8"/><polygon points="1355.0,812.5 1374.6,809.2 1393.3,869.6 1348.8,869.6" fill="#10b4f6" stroke="#10b4f6" stroke-width="0.8"/><rect x="1332.5" y="172.5" width="39.0" height="31.0" fill="#aaee58" stroke="#111" stroke-width="1.2"/><rect x="1337.5" y="304.5" width="27.0" height="24.0" fill="#64b4a4" stroke="#111" stroke-width="1.2"/><rect x="1333.5" y="466.5" width="27.0" height="26.0" fill="#64aca4" stroke="#111" stroke-width="1.2"/><rect x="1333.5" y="611.5" width="24.0" height="24.0" fill="#ace660" stroke="#111" stroke-width="1.2"/><rect x="1322.5" y="763.5" width="14.0" height="41.0" fill="#64bca4" stroke="#111" stroke-width="1.2"/><rect x="1298.5" y="878.5" width="132.0" height="26.0" fill="#ffe600" stroke="#111" stroke-width="1.2"/></svg>
<div class="t" style="left:592px;top:484px;width:60px;text-align:center;font-size:12px;color:#e0e0e0">1000</div><div class="t" style="left:659px;top:484px;width:60px;text-align:center;font-size:12px;color:#e0e0e0">1250</div><div class="t" style="left:727px;top:484px;width:60px;text-align:center;font-size:12px;color:#e0e0e0">1500</div><div class="t" style="left:795px;top:484px;width:60px;text-align:center;font-size:12px;color:#e0e0e0">1750</div><div class="t" style="left:863px;top:484px;width:60px;text-align:center;font-size:12px;color:#e0e0e0">2000</div><div class="t" style="left:930px;top:484px;width:60px;text-align:center;font-size:12px;color:#e0e0e0">2250</div><div class="t" style="left:998px;top:484px;width:60px;text-align:center;font-size:12px;color:#e0e0e0">2500</div><div class="t" style="left:520px;top:173px;width:59px;text-align:right;font-size:12px;color:#e0e0e0">0.4</div><div class="t" style="left:520px;top:217px;width:59px;text-align:right;font-size:12px;color:#e0e0e0">0.35</div><div class="t" style="left:520px;top:260px;width:59px;text-align:right;font-size:12px;color:#e0e0e0">0.3</div><div class="t" style="left:520px;top:304px;width:59px;text-align:right;font-size:12px;color:#e0e0e0">0.25</div><div class="t" style="left:520px;top:347px;width:59px;text-align:right;font-size:12px;color:#e0e0e0">0.2</div><div class="t" style="left:520px;top:390px;width:59px;text-align:right;font-size:12px;color:#e0e0e0">0.15</div><div class="t" style="left:520px;top:434px;width:59px;text-align:right;font-size:12px;color:#e0e0e0">0.1</div>
<div class="t" style="left:627px;top:910px;width:60px;text-align:center;font-size:12px;color:#e0e0e0">-2</div><div class="t" style="left:679px;top:910px;width:60px;text-align:center;font-size:12px;color:#e0e0e0">-1.5</div><div class="t" style="left:732px;top:910px;width:60px;text-align:center;font-size:12px;color:#e0e0e0">-1</div><div class="t" style="left:784px;top:910px;width:60px;text-align:center;font-size:12px;color:#e0e0e0">-0.5</div><div class="t" style="left:836px;top:910px;width:60px;text-align:center;font-size:12px;color:#e0e0e0">0</div><div class="t" style="left:890px;top:910px;width:60px;text-align:center;font-size:12px;color:#e0e0e0">0.5</div><div class="t" style="left:941px;top:910px;width:60px;text-align:center;font-size:12px;color:#e0e0e0">1</div><div class="t" style="left:994px;top:910px;width:60px;text-align:center;font-size:12px;color:#e0e0e0">1.5</div><div class="t" style="left:546px;top:581px;width:59px;text-align:right;font-size:12px;color:#e0e0e0">1.5</div><div class="t" style="left:546px;top:633px;width:59px;text-align:right;font-size:12px;color:#e0e0e0">1</div><div class="t" style="left:546px;top:684px;width:59px;text-align:right;font-size:12px;color:#e0e0e0">0.5</div><div class="t" style="left:546px;top:735px;width:59px;text-align:right;font-size:12px;color:#e0e0e0">0</div><div class="t" style="left:546px;top:786px;width:59px;text-align:right;font-size:12px;color:#e0e0e0">-0.5</div><div class="t" style="left:546px;top:837px;width:59px;text-align:right;font-size:12px;color:#e0e0e0">-1</div><div class="t" style="left:546px;top:889px;width:59px;text-align:right;font-size:12px;color:#e0e0e0">-1.5</div>
<div class="a" style="left:1102px;top:922px;width:159px;height:35px;background:#eeeeee;"></div>
<div class="a" style="left:1261px;top:922px;width:373px;height:35px;background:#2e2e2e;"></div>
<div class="a" style="left:1421px;top:924px;width:1px;height:33px;background:#555;"></div>
<div class="a" style="left:1582px;top:924px;width:1px;height:33px;background:#555;"></div>
<div class="t" style="top:939.27px;font-size:13.50px;color:#7db27d;left:981.00px;width:400px;text-align:center;transform:scaleX(0.99);transform-origin:200px 0;">Max variance image</div>
<div class="t" style="top:939.27px;font-size:13.50px;color:#e8e8e8;left:1141.50px;width:400px;text-align:center;transform:scaleX(0.99);transform-origin:200px 0;">Pseudo RGB image</div>
<div class="t" style="top:939.27px;font-size:13.50px;color:#e8e8e8;left:1301.00px;width:400px;text-align:center;transform:scaleX(0.99);transform-origin:200px 0;">Single band</div>
<div class="a" style="left:1675px;top:63px;width:245px;height:904px;background:#2e2e2e;"></div>
<div class="a" style="left:1685px;top:74px;width:230px;height:74px;background:#1e1e1e;border:1px solid #6e6e6e;border-radius:6px"></div>
<div class="a" style="left:1694px;top:65px;width:54px;height:15px;background:#1e1e1e;border-radius:8px 8px 0 0"></div>
<div class="t" style="top:69.89px;font-size:11.00px;color:#e6e6e6;left:1698.50px;transform:scaleX(0.97);transform-origin:0 0;">Selection</div>
<div class="a" style="left:1685px;top:158px;width:230px;height:81px;background:#1e1e1e;border:1px solid #6e6e6e;border-radius:6px"></div>
<div class="a" style="left:1694px;top:149px;width:37px;height:15px;background:#1e1e1e;border-radius:8px 8px 0 0"></div>
<div class="t" style="top:153.89px;font-size:11.00px;color:#e6e6e6;left:1698.50px;transform:scaleX(0.97);transform-origin:0 0;">Zoom</div>
<div class="a" style="left:1685px;top:250px;width:230px;height:67px;background:#1e1e1e;border:1px solid #6e6e6e;border-radius:6px"></div>
<div class="a" style="left:1694px;top:241px;width:93px;height:15px;background:#1e1e1e;border-radius:8px 8px 0 0"></div>
<div class="t" style="top:245.89px;font-size:11.00px;color:#e6e6e6;left:1698.50px;transform:scaleX(0.97);transform-origin:0 0;">Include / Exclude</div>
<div class="a" style="left:1685px;top:328px;width:230px;height:67px;background:#1e1e1e;border:1px solid #6e6e6e;border-radius:6px"></div>
<div class="a" style="left:1694px;top:319px;width:40px;height:15px;background:#1e1e1e;border-radius:8px 8px 0 0"></div>
<div class="t" style="top:323.89px;font-size:11.00px;color:#e6e6e6;left:1698.50px;transform:scaleX(0.97);transform-origin:0 0;">Select</div>
<div class="a" style="left:1685px;top:406px;width:230px;height:67px;background:#1e1e1e;border:1px solid #6e6e6e;border-radius:6px"></div>
<div class="a" style="left:1694px;top:397px;width:80px;height:15px;background:#1e1e1e;border-radius:8px 8px 0 0"></div>
<div class="t" style="top:401.89px;font-size:11.00px;color:#e6e6e6;left:1698.50px;transform:scaleX(0.97);transform-origin:0 0;">Spectral filters</div>
<div class="a" style="left:1685px;top:484px;width:230px;height:53px;background:#1e1e1e;border:1px solid #6e6e6e;border-radius:6px"></div>
<div class="a" style="left:1694px;top:475px;width:111px;height:15px;background:#1e1e1e;border-radius:8px 8px 0 0"></div>
<div class="t" style="top:479.89px;font-size:11.00px;color:#e6e6e6;left:1698.50px;transform:scaleX(0.97);transform-origin:0 0;">Model Pretreatments</div>
<div class="a" style="left:1685px;top:548px;width:230px;height:67px;background:#1e1e1e;border:1px solid #6e6e6e;border-radius:6px"></div>
<div class="a" style="left:1694px;top:539px;width:70px;height:15px;background:#1e1e1e;border-radius:8px 8px 0 0"></div>
<div class="t" style="top:543.89px;font-size:11.00px;color:#e6e6e6;left:1698.50px;transform:scaleX(0.97);transform-origin:0 0;">Model (PCA)</div>
<div class="a" style="left:1685px;top:626px;width:230px;height:67px;background:#1e1e1e;border:1px solid #6e6e6e;border-radius:6px"></div>
<div class="a" style="left:1694px;top:617px;width:87px;height:15px;background:#1e1e1e;border-radius:8px 8px 0 0"></div>
<div class="t" style="top:621.89px;font-size:11.00px;color:#e6e6e6;left:1698.50px;transform:scaleX(0.97);transform-origin:0 0;">Components (2)</div>
<div class="a" style="left:1685px;top:704px;width:230px;height:121px;background:#1e1e1e;border:1px solid #6e6e6e;border-radius:6px"></div>
<div class="a" style="left:1694px;top:695px;width:39px;height:15px;background:#1e1e1e;border-radius:8px 8px 0 0"></div>
<div class="t" style="top:699.89px;font-size:11.00px;color:#e6e6e6;left:1698.50px;transform:scaleX(0.97);transform-origin:0 0;">Other</div>
<div class="a" style="left:1695px;top:90px;width:33px;height:47px;background:#1e1e1e;border:1.5px solid #d0d0d0;border-radius:6px"></div>
<div class="a" style="left:1738px;top:90px;width:41px;height:47px;background:#1e1e1e;border:1.5px solid #d0d0d0;border-radius:6px"></div>
<div class="a" style="left:1789px;top:90px;width:33px;height:47px;background:#5a5d60;border:1.5px solid #d0d0d0;border-radius:6px"></div>
<div class="a" style="left:1832px;top:90px;width:33px;height:47px;background:#1e1e1e;border:1.5px solid #d0d0d0;border-radius:6px"></div>
<svg style="left:1701px;top:94px;" width="20" height="20" viewBox="0 0 20 20"><path d="M2.7 5.9Q6 2.6 10.2 2.8Q12.6 4.2 11.4 7.6Q9.2 10 10.4 12.1L14.6 12.6L17.4 16" fill="none" stroke="#d0d0d0" stroke-width="2" stroke-dasharray="1.8 2.6" stroke-linecap="round"/></svg>
<div class="t" style="top:116.84px;font-size:12.00px;color:#ececec;left:1511.50px;width:400px;text-align:center;">Free</div>
<svg style="left:1748px;top:94px;" width="20" height="20" viewBox="0 0 20 20"><circle cx="10" cy="10" r="7" fill="none" stroke="#d0d0d0" stroke-width="2" stroke-dasharray="3.2 2.3"/></svg>
<div class="t" style="top:117.34px;font-size:12.00px;color:#ececec;left:1558.50px;width:400px;text-align:center;transform:scaleX(0.95);transform-origin:200px 0;">Ellipse</div>
<svg style="left:1795px;top:94px;" width="22" height="22" viewBox="0 0 22 22"><path d="M2.5 6V2.5H6M9 2.5H12.5M15.5 2.5H18.5V6M18.5 9V12.5M18.5 15.5V18.5H15.5M12.5 18.5H9M6 18.5H2.5V15.5M2.5 12.5V9" fill="none" stroke="#c8c8c8" stroke-width="2"/></svg>
<div class="t" style="top:116.84px;font-size:12.00px;color:#dcdcdc;left:1605.50px;width:400px;text-align:center;">Rect</div>
<svg style="left:1839px;top:94px;" width="20" height="20" viewBox="0 0 20 20"><path d="M8.5 16.5L4.5 12Q3.5 10.8 4.8 10.3Q5.8 10 6.8 11L7.8 12V2.8Q7.8 1.6 8.8 1.6Q9.8 1.6 9.8 2.8V8.5Q10 7.8 11 7.8Q12 7.8 12 8.8Q12.2 8.2 13.1 8.2Q14 8.2 14.1 9.2Q14.4 8.7 15.2 8.8Q16 9 16 10V13.5Q16 15.5 14.8 16.5Z" fill="#ececec" stroke="#2a2a2a" stroke-width="0.6"/></svg>
<div class="t" style="top:116.84px;font-size:12.00px;color:#ececec;left:1648.50px;width:400px;text-align:center;">Pixel</div>
<div class="a" style="left:1736px;top:174px;width:33px;height:55px;background:#1e1e1e;border:1.5px solid #d0d0d0;border-radius:6px"></div>
<div class="a" style="left:1779px;top:174px;width:33px;height:55px;background:#1e1e1e;border:1.5px solid #d0d0d0;border-radius:6px"></div>
<div class="a" style="left:1822px;top:174px;width:33px;height:55px;background:#1e1e1e;border:1.5px solid #d0d0d0;border-radius:6px"></div>
<div class="a" style="left:1865px;top:174px;width:33px;height:55px;background:#1e1e1e;border:1.5px solid #d0d0d0;border-radius:6px"></div>
<svg style="left:1699px;top:183px;" width="22" height="22" viewBox="0 0 22 22"><circle cx="8.6" cy="8.6" r="5.6" fill="none" stroke="#d8d8d8" stroke-width="1.8"/><path d="M12.8 12.8L18.2 18.2" stroke="#d8d8d8" stroke-width="2"/></svg>
<div class="t" style="top:209.64px;font-size:12.00px;color:#e8e8e8;left:1510.30px;width:400px;text-align:center;">Reset</div>
<svg style="left:1741px;top:181px;" width="22" height="22" viewBox="0 0 22 22"><circle cx="9" cy="9" r="6" fill="none" stroke="#d8d8d8" stroke-width="1.8"/><path d="M13.3 13.3L18.5 18.5" stroke="#d8d8d8" stroke-width="2"/><path d="M6.3 9H11.7M9 6.3V11.7" stroke="#d8d8d8" stroke-width="1.5"/></svg>
<div class="t" style="top:209.64px;font-size:12.00px;color:#e8e8e8;left:1552.50px;width:400px;text-align:center;">In</div>
<svg style="left:1784px;top:181px;" width="22" height="22" viewBox="0 0 22 22"><circle cx="9" cy="9" r="6" fill="none" stroke="#d8d8d8" stroke-width="1.8"/><path d="M13.3 13.3L18.5 18.5" stroke="#d8d8d8" stroke-width="2"/><path d="M6.3 9H11.7" stroke="#d8d8d8" stroke-width="1.5"/></svg>
<div class="t" style="top:209.64px;font-size:12.00px;color:#e8e8e8;left:1595.50px;width:400px;text-align:center;">Out</div>
<svg style="left:1827px;top:181px;" width="22" height="22" viewBox="0 0 22 22"><path d="M3 7V3H7M14 3H18V7M18 14V18H14M7 18H3V14" fill="none" stroke="#d8d8d8" stroke-width="1.8"/><circle cx="10" cy="10" r="3.2" fill="none" stroke="#d8d8d8" stroke-width="1.6"/><path d="M12.3 12.3L14.5 14.5" stroke="#d8d8d8" stroke-width="1.6"/></svg>
<div class="t" style="top:209.64px;font-size:12.00px;color:#e8e8e8;left:1638.50px;width:400px;text-align:center;">Area</div>
<svg style="left:1870px;top:181px;" width="22" height="22" viewBox="0 0 22 22"><path d="M11 2V20M2 11H20" stroke="#d8d8d8" stroke-width="1.6"/><path d="M7.5 5.5L11 2L14.5 5.5M7.5 16.5L11 20L14.5 16.5M5.5 7.5L2 11L5.5 14.5M16.5 7.5L20 11L16.5 14.5" fill="none" stroke="#d8d8d8" stroke-width="1.8"/></svg>
<div class="t" style="top:209.64px;font-size:12.00px;color:#e8e8e8;left:1681.30px;width:400px;text-align:center;">Pan</div>
<svg style="left:1703px;top:266px;" width="24" height="24" viewBox="0 0 24 24"><path d="M3 7V20Q3 21 4 21H17" fill="none" stroke="#d8d8d8" stroke-width="1.6"/><rect x="6.5" y="3" width="14" height="14" rx="1" fill="none" stroke="#d8d8d8" stroke-width="1.6"/><path d="M13.5 6.3V13.7M9.8 10H17.2" stroke="#d8d8d8" stroke-width="1.8"/></svg>
<div class="t" style="top:293.74px;font-size:12.00px;color:#e8e8e8;left:1515.00px;width:400px;text-align:center;">Include</div>
<svg style="left:1769px;top:267px;" width="22" height="22" viewBox="0 0 22 22"><rect x="2.5" y="2.5" width="16" height="16" rx="1.5" fill="none" stroke="#d8d8d8" stroke-width="1.7"/><path d="M10.5 6V15M6 10.5H15" stroke="#d8d8d8" stroke-width="1.8"/></svg>
<div class="t" style="top:293.74px;font-size:12.00px;color:#e8e8e8;left:1579.00px;width:400px;text-align:center;transform:scaleX(0.97);transform-origin:200px 0;">Include Only</div>
<svg style="left:1833px;top:266px;" width="22" height="22" viewBox="0 0 22 22"><path d="M2.5 2.5H18.5V9M2.5 2.5V19.5H9" fill="none" stroke="#d8d8d8" stroke-width="1.6" stroke-dasharray="1.7 1.9"/><path d="M11.5 12.5L19 20M19 12.5L11.5 20" stroke="#e0e0e0" stroke-width="1.9"/></svg>
<div class="t" style="top:293.74px;font-size:12.00px;color:#e8e8e8;left:1643.90px;width:400px;text-align:center;">Exclude</div>
<svg style="left:1715px;top:347px;" width="18" height="18" viewBox="0 0 18 18"><circle cx="1.5" cy="6.7" r="0.80" fill="#e0e0e0" opacity="0.35"/><circle cx="1.5" cy="9.3" r="0.80" fill="#e0e0e0" opacity="0.80"/><circle cx="1.5" cy="11.9" r="0.80" fill="#e0e0e0" opacity="0.35"/><circle cx="4.1" cy="4.1" r="0.80" fill="#e0e0e0" opacity="0.80"/><circle cx="4.1" cy="6.7" r="0.80" fill="#e0e0e0" opacity="1.00"/><circle cx="4.1" cy="9.3" r="0.80" fill="#e0e0e0" opacity="1.00"/><circle cx="4.1" cy="11.9" r="0.80" fill="#e0e0e0" opacity="1.00"/><circle cx="4.1" cy="14.5" r="0.80" fill="#e0e0e0" opacity="0.80"/><circle cx="6.7" cy="1.5" r="0.80" fill="#e0e0e0" opacity="0.35"/><circle cx="6.7" cy="4.1" r="0.80" fill="#e0e0e0" opacity="1.00"/><circle cx="6.7" cy="6.7" r="1.00" fill="#e0e0e0" opacity="1.00"/><circle cx="6.7" cy="9.3" r="1.00" fill="#e0e0e0" opacity="1.00"/><circle cx="6.7" cy="11.9" r="1.00" fill="#e0e0e0" opacity="1.00"/><circle cx="6.7" cy="14.5" r="0.80" fill="#e0e0e0" opacity="1.00"/><circle cx="6.7" cy="17.1" r="0.80" fill="#e0e0e0" opacity="0.35"/><circle cx="9.3" cy="1.5" r="0.80" fill="#e0e0e0" opacity="0.80"/><circle cx="9.3" cy="4.1" r="0.80" fill="#e0e0e0" opacity="1.00"/><circle cx="9.3" cy="6.7" r="1.00" fill="#e0e0e0" opacity="1.00"/><circle cx="9.3" cy="9.3" r="1.00" fill="#e0e0e0" opacity="1.00"/><circle cx="9.3" cy="11.9" r="1.00" fill="#e0e0e0" opacity="1.00"/><circle cx="9.3" cy="14.5" r="0.80" fill="#e0e0e0" opacity="1.00"/><circle cx="9.3" cy="17.1" r="0.80" fill="#e0e0e0" opacity="0.80"/><circle cx="11.9" cy="1.5" r="0.80" fill="#e0e0e0" opacity="0.35"/><circle cx="11.9" cy="4.1" r="0.80" fill="#e0e0e0" opacity="1.00"/><circle cx="11.9" cy="6.7" r="1.00" fill="#e0e0e0" opacity="1.00"/><circle cx="11.9" cy="9.3" r="1.00" fill="#e0e0e0" opacity="1.00"/><circle cx="11.9" cy="11.9" r="1.00" fill="#e0e0e0" opacity="1.00"/><circle cx="11.9" cy="14.5" r="0.80" fill="#e0e0e0" opacity="1.00"/><circle cx="11.9" cy="17.1" r="0.80" fill="#e0e0e0" opacity="0.35"/><circle cx="14.5" cy="4.1" r="0.80" fill="#e0e0e0" opacity="0.80"/><circle cx="14.5" cy="6.7" r="0.80" fill="#e0e0e0" opacity="1.00"/><circle cx="14.5" cy="9.3" r="0.80" fill="#e0e0e0" opacity="1.00"/><circle cx="14.5" cy="11.9" r="0.80" fill="#e0e0e0" opacity="1.00"/><circle cx="14.5" cy="14.5" r="0.80" fill="#e0e0e0" opacity="0.80"/><circle cx="17.1" cy="6.7" r="0.80" fill="#e0e0e0" opacity="0.35"/><circle cx="17.1" cy="9.3" r="0.80" fill="#e0e0e0" opacity="0.80"/><circle cx="17.1" cy="11.9" r="0.80" fill="#e0e0e0" opacity="0.35"/></svg>
<div class="t" style="top:371.84px;font-size:12.00px;color:#e8e8e8;left:1523.00px;width:400px;text-align:center;transform:scaleX(0.97);transform-origin:200px 0;">By Density</div>
<svg style="left:1786px;top:345px;" width="20" height="20" viewBox="0 0 20 20"><path d="M10.5 2.5H6M3.5 2.5V17.5H17.5V12" fill="none" stroke="#d8d8d8" stroke-width="1.7" stroke-dasharray="1.8 1.9"/><path d="M10.5 2.5H14Q17.5 2.5 17.5 6V11" fill="none" stroke="#d8d8d8" stroke-width="1.7"/></svg>
<div class="t" style="top:371.84px;font-size:12.00px;color:#e8e8e8;left:1596.60px;width:400px;text-align:center;transform:scaleX(0.97);transform-origin:200px 0;">Border pixels</div>
<div class="t" style="top:425.95px;font-size:14.00px;color:#ececec;left:1697.20px;">None</div>
<svg style="left:1882px;top:423px;" width="22" height="22" viewBox="0 0 22 22"><path d="M3 19.5L4 14.5L15.5 3Q17 1.7 18.5 3Q20 4.5 18.8 6L7.3 17.5Z" fill="none" stroke="#d8d8d8" stroke-width="1.7" stroke-linejoin="round"/></svg>
<div class="t" style="top:449.24px;font-size:12.00px;color:#e8e8e8;left:1692.50px;width:400px;text-align:center;">Edit</div>
<svg style="left:1697px;top:503px;" width="21" height="21" viewBox="0 0 21 21"><circle cx="10.5" cy="10.2" r="9" fill="none" stroke="#d0d0d0" stroke-width="1.5"/></svg>
<div class="t" style="top:506.65px;font-size:14.00px;color:#ececec;left:1726.70px;transform:scaleX(0.89);transform-origin:0 0;">SNV</div>
<svg style="left:1769px;top:503px;" width="21" height="21" viewBox="0 0 21 21"><circle cx="10" cy="10.2" r="9" fill="#5a5a5a"/><path d="M5.8 10.3L8.8 13.2L14.2 7.5" fill="none" stroke="#f0f0f0" stroke-width="2"/></svg>
<div class="t" style="top:506.65px;font-size:14.00px;color:#7a7a7a;left:1798.50px;transform:scaleX(0.94);transform-origin:0 0;">Center</div>
<svg style="left:1707px;top:565px;" width="24" height="22" viewBox="0 0 24 22"><path d="M3.2 13.2L9.5 6.6L13.4 10.8L21 2.7M3.2 19.5L9.5 13.2L13.4 17.1L21 9" fill="none" stroke="#d8d8d8" stroke-width="1.9" stroke-linecap="round"/></svg>
<div class="t" style="top:591.74px;font-size:12.00px;color:#e8e8e8;left:1519.30px;width:400px;text-align:center;transform:scaleX(0.97);transform-origin:200px 0;">Statistics</div>
<svg style="left:1764px;top:565px;" width="22" height="22" viewBox="0 0 22 22"><path d="M3 5H19M7.5 4.5V2.8H14.5V4.5" fill="none" stroke="#d8d8d8" stroke-width="1.8"/><path d="M5.5 5.5V19.2Q5.5 20 6.3 20H15.7Q16.5 20 16.5 19.2V5.5" fill="none" stroke="#d8d8d8" stroke-width="1.8"/><path d="M9.3 8.5V16.5M12.7 8.5V16.5" stroke="#d8d8d8" stroke-width="1.7"/></svg>
<div class="t" style="top:591.74px;font-size:12.00px;color:#e8e8e8;left:1574.90px;width:400px;text-align:center;">Remove</div>
<div class="t" style="top:645.34px;font-size:18.50px;color:#f0f0f0;font-weight:bold;left:1506.00px;width:400px;text-align:center;transform:scaleX(0.78);transform-origin:200px 0;">+1</div>
<div class="t" style="top:645.34px;font-size:18.50px;color:#f0f0f0;font-weight:bold;left:1550.30px;width:400px;text-align:center;transform:scaleX(0.78);transform-origin:200px 0;">−1</div>
<svg style="left:1784px;top:643px;" width="22" height="22" viewBox="0 0 22 22"><path d="M3 19.5L4 14.5L15.5 3Q17 1.7 18.5 3Q20 4.5 18.8 6L7.3 17.5Z" fill="none" stroke="#d8d8d8" stroke-width="1.7" stroke-linejoin="round"/></svg>
<div class="t" style="top:670.04px;font-size:12.00px;color:#e8e8e8;left:1507.00px;width:400px;text-align:center;">Add</div>
<div class="t" style="top:670.04px;font-size:12.00px;color:#e8e8e8;left:1550.70px;width:400px;text-align:center;">Remove</div>
<div class="t" style="top:670.04px;font-size:12.00px;color:#e8e8e8;left:1594.50px;width:400px;text-align:center;">Set</div>
<svg style="left:1699px;top:721px;" width="22" height="22" viewBox="0 0 22 22"><path d="M11.4 4.6A7.4 7.4 0 0 1 11.9 19.4M10 19.4A7.4 7.4 0 0 1 5.6 7.2" fill="none" stroke="#d8d8d8" stroke-width="2"/><path d="M7.2 4.9L11 1.3L10.8 8.4Z" fill="#d8d8d8"/></svg>
<div class="t" style="top:747.84px;font-size:12.00px;color:#e8e8e8;left:1511.00px;width:400px;text-align:center;">Reset</div>
<div class="t" style="top:772.22px;font-size:12.50px;color:#e8e8e8;left:1695.60px;transform:scaleX(0.97);transform-origin:0 0;">Spatial reduce (none)</div>
<div class="a" style="left:1695px;top:790px;width:210px;height:25px;background:#1e1e1e;border:1px solid #8a8a8a"></div>
<div class="t" style="top:795.85px;font-size:14.00px;color:#ececec;left:1700.90px;transform:scaleX(0.97);transform-origin:0 0;">Automatic</div>
<svg style="left:1886px;top:798px;" width="12" height="8" viewBox="0 0 12 8"><path d="M0.5 0.5H11.5L6 7Z" fill="#e8e8e8"/></svg>
<div class="a" style="left:500px;top:967px;width:1420px;height:65px;background:linear-gradient(#515151,#2b2b2b);"></div>
<div class="t" style="top:978.14px;font-size:12.00px;color:#e0e0e0;left:512.40px;transform:scaleX(1.04);transform-origin:0 0;">Segmentation</div>
<div class="a" style="left:512px;top:996px;width:200px;height:26px;background:#1e1e1e;border:1px solid #8a8a8a"></div>
<div class="t" style="top:1003.35px;font-size:14.00px;color:#ececec;left:518.30px;transform:scaleX(0.93);transform-origin:0 0;">Manual</div>
<svg style="left:692px;top:1005px;" width="14" height="9" viewBox="0 0 14 9"><path d="M0.5 0.5H13.5L7 8.5Z" fill="#e8e8e8"/></svg>
<div class="a" style="left:724px;top:977px;width:2px;height:45px;background:#8c8c8c;"></div>
<div class="a" style="left:830px;top:977px;width:2px;height:45px;background:#8c8c8c;"></div>
<div class="a" style="left:1024px;top:977px;width:2px;height:45px;background:#8c8c8c;"></div>
<svg style="left:768px;top:981px;" width="20" height="20" viewBox="0 0 20 20"><path d="M2 3H16M2 7H16M2 11H11M2 15H9" stroke="#e0e0e0" stroke-width="1.7"/><path d="M15 10V19M10.5 14.5H19.5" stroke="#e0e0e0" stroke-width="1.9"/></svg>
<div class="t" style="top:1006.42px;font-size:12.50px;color:#ececec;left:578.00px;width:400px;text-align:center;transform:scaleX(0.95);transform-origin:200px 0;">Add Sample(s)</div>
<div class="a" style="left:730px;top:967px;width:98px;height:60px;background:transparent;border:5px solid #ec1c24"></div>
<svg style="left:865px;top:980px;" width="24" height="24" viewBox="0 0 24 24"><path d="M2 2H22V10M2 2V10" fill="none" stroke="#e0e0e0" stroke-width="1.5" stroke-dasharray="1.6 1.6"/><path d="M10.5 20.5L7 16.5Q6.3 15.5 7.3 15Q8 14.7 8.8 15.5L9.5 16.2V8.5Q9.5 7.5 10.4 7.5Q11.3 7.5 11.3 8.5V13Q11.5 12.4 12.3 12.4Q13.1 12.4 13.2 13.3Q13.5 12.8 14.2 12.9Q15 13 15 13.8Q15.3 13.4 16 13.5Q16.7 13.7 16.7 14.4V17.5Q16.7 19.5 15.5 20.5Z" fill="none" stroke="#e0e0e0" stroke-width="1.4"/></svg>
<div class="t" style="top:1006.42px;font-size:12.50px;color:#ececec;left:677.80px;width:400px;text-align:center;transform:scaleX(0.95);transform-origin:200px 0;">Select pixels</div>
<svg style="left:954px;top:979px;" width="24" height="24" viewBox="0 0 24 24"><path d="M4.2 7.2V4.6Q4.2 3.2 5.6 3.2H20.2Q21.6 3.2 21.6 4.6V19.1Q21.6 20.5 20.2 20.5H5.6Q4.2 20.5 4.2 19.1V16.4" fill="none" stroke="#e0e0e0" stroke-width="1.8"/><path d="M4.4 4.4H21.4" stroke="#e0e0e0" stroke-width="2.4"/><path d="M4 12.8H16.8M13.4 9.4L16.8 12.8L13.4 16.2" fill="none" stroke="#e0e0e0" stroke-width="1.8"/></svg>
<div class="t" style="top:1006.42px;font-size:12.50px;color:#ececec;left:767.50px;width:400px;text-align:center;transform:scaleX(0.95);transform-origin:200px 0;">Go to Sample(s)</div>
<svg style="left:1040px;top:988px;" width="22" height="22" viewBox="0 0 22 22"><circle cx="10.8" cy="10.8" r="8.7" fill="none" stroke="#cfcfcf" stroke-width="1.5"/></svg>
<div class="t" style="top:993.23px;font-size:14.50px;color:#ececec;left:1070.00px;transform:scaleX(0.95);transform-origin:0 0;">Show descriptors</div>
<div class="a" style="left:1808px;top:974px;width:100px;height:49px;background:#9e7aa7;border-radius:7px"></div>
<svg style="left:1845px;top:980px;" width="24" height="20" viewBox="0 0 24 20"><rect x="1.5" y="3" width="14" height="13" rx="1.5" fill="none" stroke="#f4f4f4" stroke-width="2"/><path d="M16 8L21.5 4.5V14.5L16 11Z" fill="#f4f4f4"/></svg>
<div class="t" style="top:1006.02px;font-size:12.50px;color:#f4f4f4;left:1657.80px;width:400px;text-align:center;transform:scaleX(0.97);transform-origin:200px 0;">Recorder</div>
</body></html>
